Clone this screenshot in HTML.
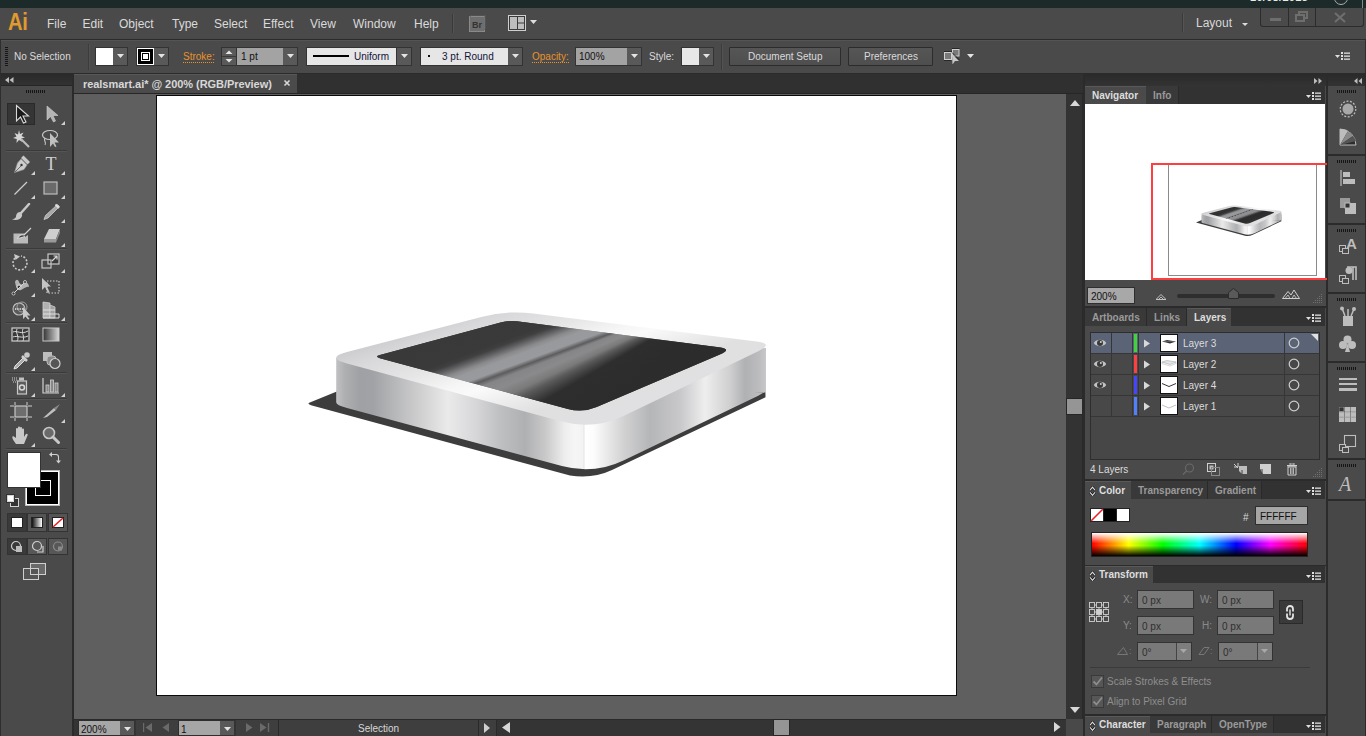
<!DOCTYPE html>
<html><head><meta charset="utf-8">
<style>
*{margin:0;padding:0;box-sizing:border-box}
html,body{width:1366px;height:736px;overflow:hidden;background:#4a4a4a;font-family:"Liberation Sans",sans-serif;font-size:10px;color:#d6d6d6}
.a{position:absolute;display:block}
.t{position:absolute;white-space:nowrap;line-height:1}
</style></head><body>

<div class="a" style="left:0px;top:0px;width:1366px;height:8px;background:#1c2a29;"></div>
<div class="t" style="left:1250px;top:-8.11px;font-size:11px;color:#e8ecec;font-weight:700;letter-spacing:0.3px">10/08/2013</div>
<svg class="a" style="left:1332px;top:-8px;" width="18" height="13" viewBox="0 0 18 13"><circle cx="9" cy="6" r="6.5" fill="#222c2c" stroke="#a9b0b0" stroke-width="1"/></svg>
<div class="a" style="left:1362px;top:0px;width:1px;height:8px;background:#7d8c8b;"></div>
<div class="a" style="left:0px;top:8px;width:1366px;height:31px;background:#4a4a4a;"></div>
<div class="a" style="left:0px;top:39px;width:1366px;height:1px;background:#2b2b2b;"></div>
<div class="t" style="left:8px;top:9px;font-size:24px;font-weight:700;color:#e09a30;letter-spacing:-0.5px;transform:scaleX(0.84);transform-origin:0 0;line-height:26px">Ai</div>
<div class="t" style="left:47px;top:17.84px;font-size:12px;color:#dadada;font-weight:400;">File</div>
<div class="t" style="left:82.5px;top:17.84px;font-size:12px;color:#dadada;font-weight:400;">Edit</div>
<div class="t" style="left:119px;top:17.84px;font-size:12px;color:#dadada;font-weight:400;">Object</div>
<div class="t" style="left:172px;top:17.84px;font-size:12px;color:#dadada;font-weight:400;">Type</div>
<div class="t" style="left:214px;top:17.84px;font-size:12px;color:#dadada;font-weight:400;">Select</div>
<div class="t" style="left:263px;top:17.84px;font-size:12px;color:#dadada;font-weight:400;">Effect</div>
<div class="t" style="left:310px;top:17.84px;font-size:12px;color:#dadada;font-weight:400;">View</div>
<div class="t" style="left:353px;top:17.84px;font-size:12px;color:#dadada;font-weight:400;">Window</div>
<div class="t" style="left:414px;top:17.84px;font-size:12px;color:#dadada;font-weight:400;">Help</div>
<div class="a" style="left:452px;top:14px;width:1px;height:19px;background:#3a3a3a;"></div>
<div class="a" style="left:453px;top:14px;width:1px;height:19px;background:#555;"></div>
<svg class="a" style="left:469px;top:15px;" width="17" height="17" viewBox="0 0 17 17"><rect x="0.5" y="1.5" width="15" height="15" fill="#6e6e6e" stroke="#8a8a8a"/><path d="M1 1.5L3 0H16V14L15.5 15" fill="none" stroke="#5a5a5a"/><text x="8" y="12.5" font-family="Liberation Sans" font-size="9" font-weight="700" fill="#333" text-anchor="middle">Br</text></svg>
<svg class="a" style="left:508px;top:15px;" width="30" height="17" viewBox="0 0 30 17"><rect x="0.5" y="0.5" width="17" height="15" fill="#3a3a3a" stroke="#cfcfcf"/><rect x="2" y="2" width="7" height="12" fill="#bdbdbd"/><rect x="10" y="2" width="6" height="5.5" fill="#bdbdbd"/><rect x="10" y="8.5" width="6" height="5.5" fill="#bdbdbd"/><path d="M22 5H29L25.5 9Z" fill="#dedede"/></svg>
<div class="a" style="left:1182px;top:13px;width:1px;height:19px;background:#3a3a3a;"></div>
<div class="a" style="left:1183px;top:13px;width:1px;height:19px;background:#555;"></div>
<div class="t" style="left:1196px;top:16.84px;font-size:12px;color:#d8d8d8;font-weight:400;">Layout</div>
<svg class="a" style="left:1242px;top:23px;" width="6" height="3" viewBox="0 0 6 3"><path d="M0 0H6L3.0 3Z" fill="#dcdcdc"/></svg>
<div class="a" style="left:1260px;top:8px;width:104px;height:19px;border:1px solid #2c2c2c;border-top:none;border-radius:0 0 3px 3px;background:#4a4a4a"></div>
<div class="a" style="left:1288px;top:8px;width:1px;height:18px;background:#2c2c2c;"></div>
<div class="a" style="left:1315px;top:8px;width:1px;height:18px;background:#2c2c2c;"></div>
<div class="a" style="left:1270px;top:18px;width:11px;height:3px;background:#6e6e6e;"></div>
<svg class="a" style="left:1295px;top:11px;" width="14" height="12" viewBox="0 0 14 12"><rect x="4" y="1" width="8" height="6" fill="none" stroke="#6e6e6e" stroke-width="2"/><rect x="1" y="4" width="8" height="6" fill="#4a4a4a" stroke="#6e6e6e" stroke-width="2"/></svg>
<svg class="a" style="left:1333px;top:12px;" width="14" height="11" viewBox="0 0 14 11"><path d="M2 1L12 10M12 1L2 10" stroke="#6e6e6e" stroke-width="2.2"/></svg>
<div class="a" style="left:0px;top:40px;width:1366px;height:33px;background:#4a4a4a;"></div>
<div class="a" style="left:0px;top:40px;width:1366px;height:1px;background:#545454;"></div>
<div class="a" style="left:0px;top:40px;width:1px;height:33px;background:#2e2e2e;"></div>
<div class="a" style="left:1365px;top:40px;width:1px;height:33px;background:#2e2e2e;"></div>
<div class="a" style="left:0px;top:73px;width:1366px;height:1px;background:#2b2b2b;"></div>
<div class="a" style="left:5px;top:47px;width:3px;height:20px;background:repeating-linear-gradient(180deg,#161616 0 1px,transparent 1px 2px);"></div>
<div class="t" style="left:14px;top:51.53px;font-size:10px;color:#dadada;font-weight:400;">No Selection</div>
<div class="a" style="left:88px;top:44px;width:1px;height:26px;background:#3c3c3c;"></div>
<div class="a" style="left:89px;top:44px;width:1px;height:26px;background:#525252;"></div>
<div class="a" style="left:95px;top:47px;width:19px;height:19px;background:#fff;border:1px solid #333"></div>
<div class="a" style="left:113px;top:47px;width:15px;height:19px;background:#595959;border:1px solid #333;border-left:none"></div>
<svg class="a" style="left:117px;top:54px;" width="7" height="4" viewBox="0 0 7 4"><path d="M0 0H7L3.5 4Z" fill="#e4e4e4"/></svg>
<div class="a" style="left:136px;top:47px;width:19px;height:19px;background:#000;border:1px solid #333"></div>
<svg class="a" style="left:137px;top:48px;" width="17" height="17" viewBox="0 0 17 17"><rect x="0.5" y="0.5" width="16" height="16" fill="none" stroke="#fff"/><rect x="4.5" y="4.5" width="8" height="8" fill="none" stroke="#fff"/><rect x="6" y="6" width="5" height="5" fill="#fff"/></svg>
<div class="a" style="left:154px;top:47px;width:15px;height:19px;background:#595959;border:1px solid #333;border-left:none"></div>
<svg class="a" style="left:158px;top:54px;" width="7" height="4" viewBox="0 0 7 4"><path d="M0 0H7L3.5 4Z" fill="#e4e4e4"/></svg>
<div class="t" style="left:183px;top:51.53px;font-size:10px;color:#e8922c;font-weight:400;">Stroke:</div>
<div class="a" style="left:183px;top:62px;width:31px;height:1px;background:repeating-linear-gradient(90deg,#e8922c 0 1px,transparent 1px 2px);"></div>
<div class="a" style="left:221px;top:47px;width:16px;height:19px;background:#595959;border:1px solid #333"></div>
<div class="a" style="left:222px;top:56px;width:14px;height:1px;background:#3a3a3a;"></div>
<svg class="a" style="left:225px;top:49px;" width="8" height="15" viewBox="0 0 8 15"><path d="M0.5 5H7.5L4 1.5Z" fill="#e4e4e4"/><path d="M0.5 10H7.5L4 13.5Z" fill="#e4e4e4"/></svg>
<div class="a" style="left:236px;top:47px;width:48px;height:19px;background:#a3a3a3;border:1px solid #333"></div>
<div class="t" style="left:241px;top:51.53px;font-size:10px;color:#111;font-weight:400;">1 pt</div>
<div class="a" style="left:283px;top:47px;width:15px;height:19px;background:#595959;border:1px solid #333;border-left:none"></div>
<svg class="a" style="left:287px;top:54px;" width="7" height="4" viewBox="0 0 7 4"><path d="M0 0H7L3.5 4Z" fill="#e4e4e4"/></svg>
<div class="a" style="left:306px;top:47px;width:91px;height:19px;background:#e6e6e6;border:1px solid #333"></div>
<div class="a" style="left:313px;top:55px;width:36px;height:2px;background:#000;"></div>
<div class="t" style="left:354px;top:51.53px;font-size:10px;color:#12123a;font-weight:400;">Uniform</div>
<div class="a" style="left:397px;top:47px;width:15px;height:19px;background:#595959;border:1px solid #333;border-left:none"></div>
<svg class="a" style="left:401px;top:54px;" width="7" height="4" viewBox="0 0 7 4"><path d="M0 0H7L3.5 4Z" fill="#e4e4e4"/></svg>
<div class="a" style="left:420px;top:47px;width:89px;height:19px;background:#e6e6e6;border:1px solid #333"></div>
<div class="a" style="left:428px;top:55px;width:2px;height:2px;background:#111;"></div>
<div class="t" style="left:442px;top:51.53px;font-size:10px;color:#12123a;font-weight:400;">3 pt. Round</div>
<div class="a" style="left:508px;top:47px;width:15px;height:19px;background:#595959;border:1px solid #333;border-left:none"></div>
<svg class="a" style="left:512px;top:54px;" width="7" height="4" viewBox="0 0 7 4"><path d="M0 0H7L3.5 4Z" fill="#e4e4e4"/></svg>
<div class="t" style="left:532px;top:51.53px;font-size:10px;color:#e8922c;font-weight:400;">Opacity:</div>
<div class="a" style="left:532px;top:62px;width:37px;height:1px;background:repeating-linear-gradient(90deg,#e8922c 0 1px,transparent 1px 2px);"></div>
<div class="a" style="left:575px;top:47px;width:53px;height:19px;background:#a3a3a3;border:1px solid #333"></div>
<div class="t" style="left:579px;top:51.53px;font-size:10px;color:#111;font-weight:400;">100%</div>
<div class="a" style="left:627px;top:47px;width:15px;height:19px;background:#595959;border:1px solid #333;border-left:none"></div>
<svg class="a" style="left:631px;top:54px;" width="7" height="4" viewBox="0 0 7 4"><path d="M0 0H7L3.5 4Z" fill="#e4e4e4"/></svg>
<div class="t" style="left:649px;top:51.53px;font-size:10px;color:#dadada;font-weight:400;">Style:</div>
<div class="a" style="left:681px;top:47px;width:19px;height:19px;background:#e8e8e8;border:1px solid #333"></div>
<div class="a" style="left:699px;top:47px;width:15px;height:19px;background:#595959;border:1px solid #333;border-left:none"></div>
<svg class="a" style="left:703px;top:54px;" width="7" height="4" viewBox="0 0 7 4"><path d="M0 0H7L3.5 4Z" fill="#e4e4e4"/></svg>
<div class="a" style="left:721px;top:44px;width:1px;height:26px;background:#3c3c3c;"></div>
<div class="a" style="left:722px;top:44px;width:1px;height:26px;background:#525252;"></div>
<div class="a" style="left:729px;top:47px;width:112px;height:19px;background:linear-gradient(#565656,#4e4e4e);border:1px solid #2c2c2c;border-radius:1px"></div>
<div class="t" style="left:748px;top:51.53px;font-size:10px;color:#dadada;font-weight:400;">Document Setup</div>
<div class="a" style="left:848px;top:47px;width:85px;height:19px;background:linear-gradient(#565656,#4e4e4e);border:1px solid #2c2c2c;border-radius:1px"></div>
<div class="t" style="left:864px;top:51.53px;font-size:10px;color:#dadada;font-weight:400;">Preferences</div>
<svg class="a" style="left:942px;top:46px;" width="20" height="18" viewBox="0 0 20 18"><rect x="2.5" y="6.5" width="7" height="7" fill="#7a7a7a" stroke="#d0d0d0" stroke-width="1"/><rect x="10.5" y="3.5" width="6.5" height="6.5" fill="#7a7a7a" stroke="#d0d0d0" stroke-width="1"/><path d="M2 5.5H10M2 14.5H9M10 2.5H17.5" stroke="#1e1e1e" stroke-width="0.8"/><path d="M10 8L17 15H13L10.5 18.5Z" fill="#c8c8c8"/><path d="M10 6.5L17.5 14" stroke="#1e1e1e" stroke-width="0.9"/></svg>
<svg class="a" style="left:967px;top:54px;" width="7" height="4" viewBox="0 0 7 4"><path d="M0 0H7L3.5 4Z" fill="#e4e4e4"/></svg>
<svg class="a" style="left:1335px;top:52px;" width="16" height="9" viewBox="0 0 16 9"><path d="M0 3H5L2.5 6Z" fill="#e0e0e0"/><rect x="6" y="0" width="2" height="2" fill="#e0e0e0"/><rect x="6" y="3" width="2" height="2" fill="#e0e0e0"/><rect x="6" y="6" width="2" height="2" fill="#e0e0e0"/><rect x="9" y="0.5" width="6" height="1.3" fill="#e0e0e0"/><rect x="9" y="3.5" width="6" height="1.3" fill="#e0e0e0"/><rect x="9" y="6.5" width="6" height="1.3" fill="#e0e0e0"/></svg>
<div class="a" style="left:0px;top:74px;width:72px;height:662px;background:#4a4a4a;"></div>
<div class="a" style="left:0px;top:74px;width:1px;height:662px;background:#2e2e2e;"></div>
<div class="a" style="left:1px;top:74px;width:71px;height:12px;background:linear-gradient(#2a2a2a,#333);"></div>
<div class="a" style="left:1px;top:85px;width:71px;height:1px;background:#262626;"></div>
<svg class="a" style="left:5px;top:77px;" width="9" height="7" viewBox="0 0 9 7"><path d="M4 0V6L0 3Z M8.5 0V6L4.5 3Z" fill="#bdbdbd"/></svg>
<div class="a" style="left:72px;top:74px;width:2px;height:662px;background:#2b2b2b;"></div>
<div class="a" style="left:26px;top:90px;width:19px;height:3px;background:repeating-linear-gradient(90deg,#151515 0 1px,transparent 1px 2px);"></div>
<div class="a" style="left:7px;top:103px;width:28px;height:22px;background:#353535;border:1px solid #2a2a2a"></div>
<svg class="a" style="left:14px;top:104px;" width="16" height="20" viewBox="0 0 16 20"><path d="M2.5 1.5V17L6.5 13L9.5 19L12 18L9 12H14.5Z" fill="#1a1a1a" stroke="#d8d8d8" stroke-width="1.1" stroke-linejoin="miter"/></svg>
<svg class="a" style="left:45px;top:105px;" width="14" height="18" viewBox="0 0 14 18"><path d="M2 1V15L5.5 11.5L8.5 17L10.5 16L8 10.5H13Z" fill="#b4b4b4" stroke="#cfcfcf" stroke-width="0.6"/></svg>
<svg class="a" style="left:61px;top:121px;" width="4" height="4" viewBox="0 0 4 4"><path d="M4 0V4H0Z" fill="#d0d0d0"/></svg>
<svg class="a" style="left:11px;top:128px;" width="20" height="20" viewBox="0 0 20 20"><path d="M8 2L9 6L12.5 4.5L10.5 8L14 9.5L10.2 10.5L11.5 14L8 12L5.5 15L5.8 11L2 10L5.5 8.5L3.5 5L7 6.5Z" fill="#d6d6d6"/><path d="M10 11L18 19" stroke="#bcbcbc" stroke-width="2.2"/></svg>
<svg class="a" style="left:41px;top:128px;" width="20" height="20" viewBox="0 0 20 20"><ellipse cx="9" cy="7" rx="7.5" ry="4.5" fill="none" stroke="#c8c8c8" stroke-width="1.2"/><path d="M4 10C2 13 6 14 4 17" fill="none" stroke="#c8c8c8" stroke-width="1.1"/><path d="M9 5V19L12 15.5L14 19L15.5 18.5L13.5 14.5H18Z" fill="#c0c0c0"/></svg>
<div class="a" style="left:6px;top:150px;width:61px;height:1px;background:#3a3a3a;"></div>
<div class="a" style="left:6px;top:151px;width:61px;height:1px;background:#555;"></div>
<svg class="a" style="left:12px;top:154px;" width="20" height="20" viewBox="0 0 20 20"><path d="M11.5 1.5L18 8L15.5 10.5L9 4Z" fill="#c8c8c8"/><path d="M9 5L15 11L12 15.5L2.5 18.5L5.5 9Z" fill="#cdcdcd" stroke="#9a9a9a" stroke-width="0.6"/><circle cx="9.5" cy="11" r="1.2" fill="#333"/><path d="M3 18L9 12" stroke="#555" stroke-width="0.8"/></svg>
<svg class="a" style="left:31px;top:171px;" width="4" height="4" viewBox="0 0 4 4"><path d="M4 0V4H0Z" fill="#d0d0d0"/></svg>
<svg class="a" style="left:43px;top:155px;" width="16" height="17" viewBox="0 0 16 17"><text x="8" y="15" font-family="Liberation Serif" font-size="18" fill="#cfcfcf" text-anchor="middle">T</text></svg>
<svg class="a" style="left:61px;top:171px;" width="4" height="4" viewBox="0 0 4 4"><path d="M4 0V4H0Z" fill="#d0d0d0"/></svg>
<svg class="a" style="left:13px;top:180px;" width="16" height="16" viewBox="0 0 16 16"><path d="M1.5 14.5L14 2" stroke="#cdcdcd" stroke-width="1.3"/></svg>
<svg class="a" style="left:31px;top:195px;" width="4" height="4" viewBox="0 0 4 4"><path d="M4 0V4H0Z" fill="#d0d0d0"/></svg>
<svg class="a" style="left:43px;top:181px;" width="16" height="14" viewBox="0 0 16 14"><rect x="1" y="1" width="13" height="12" fill="#6a6a6a" stroke="#bcbcbc" stroke-width="1.2"/></svg>
<svg class="a" style="left:61px;top:195px;" width="4" height="4" viewBox="0 0 4 4"><path d="M4 0V4H0Z" fill="#d0d0d0"/></svg>
<svg class="a" style="left:11px;top:203px;" width="20" height="18" viewBox="0 0 20 18"><path d="M18 1L10 10" stroke="#c8c8c8" stroke-width="2.5" stroke-linecap="round"/><path d="M9 9C6 9 5 12 5 14C4 15.5 2.5 16 1 16.5C5 17.5 10 17 11 13C11.5 11.5 10.5 10 9 9Z" fill="#c8c8c8"/></svg>
<svg class="a" style="left:42px;top:203px;" width="18" height="18" viewBox="0 0 18 18"><path d="M15.5 1.5L17.5 3.5L6 15L2 16.5L3.5 12.5Z" fill="#a8a8a8" stroke="#cfcfcf" stroke-width="0.8"/><path d="M13.5 1.5L17 5" stroke="#ddd" stroke-width="2"/></svg>
<svg class="a" style="left:61px;top:219px;" width="4" height="4" viewBox="0 0 4 4"><path d="M4 0V4H0Z" fill="#d0d0d0"/></svg>
<svg class="a" style="left:12px;top:227px;" width="20" height="18" viewBox="0 0 20 18"><path d="M1.5 6.5H13V10L16 8V16.5H1.5Z" fill="#bababa"/><path d="M19 1L12 8C9 7 6 9 5.5 11.5C8.5 11 11 10.5 13 9.5" fill="#444" stroke="#d0d0d0" stroke-width="1.2"/></svg>
<svg class="a" style="left:42px;top:227px;" width="20" height="17" viewBox="0 0 20 17"><path d="M7 2H18L14 12H2Z" fill="#cfcfcf"/><path d="M2 12H14V15.5H2Z" fill="#9a9a9a"/><path d="M14 12L18 2V6L14 15.5Z" fill="#8a8a8a"/></svg>
<svg class="a" style="left:61px;top:243px;" width="4" height="4" viewBox="0 0 4 4"><path d="M4 0V4H0Z" fill="#d0d0d0"/></svg>
<div class="a" style="left:6px;top:248px;width:61px;height:1px;background:#3a3a3a;"></div>
<div class="a" style="left:6px;top:249px;width:61px;height:1px;background:#555;"></div>
<svg class="a" style="left:11px;top:253px;" width="20" height="20" viewBox="0 0 20 20"><path d="M4 5A7 7 0 1 0 10 3" fill="none" stroke="#c8c8c8" stroke-width="1.6" stroke-dasharray="2 1.6"/><path d="M3 1L9 3.5L4.5 7Z" fill="#c8c8c8"/></svg>
<svg class="a" style="left:31px;top:269px;" width="4" height="4" viewBox="0 0 4 4"><path d="M4 0V4H0Z" fill="#d0d0d0"/></svg>
<svg class="a" style="left:41px;top:253px;" width="20" height="19" viewBox="0 0 20 19"><rect x="7" y="1" width="11" height="10" fill="#3a3a3a" stroke="#c8c8c8" stroke-width="1.2"/><rect x="1" y="7" width="9" height="8" fill="none" stroke="#c8c8c8" stroke-width="1.2"/><path d="M11 8L16 3M12.5 3H16V6.5" fill="none" stroke="#d8d8d8" stroke-width="1.2"/></svg>
<svg class="a" style="left:61px;top:269px;" width="4" height="4" viewBox="0 0 4 4"><path d="M4 0V4H0Z" fill="#d0d0d0"/></svg>
<svg class="a" style="left:11px;top:277px;" width="20" height="20" viewBox="0 0 20 20"><path d="M4 5C5 2 7 2 8 5C10 9 12 7 14 6C16 5 18 7 18 10C15 9 13 12 10 13C7 14 5 11 4 5Z" fill="#b4b4b4"/><circle cx="8" cy="10" r="2" fill="#333" stroke="#e0e0e0" stroke-width="1"/><path d="M2 17L14 5" stroke="#d8d8d8" stroke-width="1"/><circle cx="2.5" cy="16.5" r="1.5" fill="#333" stroke="#e0e0e0" stroke-width="0.8"/><circle cx="14" cy="5" r="1.5" fill="#333" stroke="#e0e0e0" stroke-width="0.8"/></svg>
<svg class="a" style="left:31px;top:293px;" width="4" height="4" viewBox="0 0 4 4"><path d="M4 0V4H0Z" fill="#d0d0d0"/></svg>
<svg class="a" style="left:41px;top:277px;" width="20" height="20" viewBox="0 0 20 20"><rect x="6" y="4" width="12" height="12" fill="none" stroke="#d0d0d0" stroke-width="1.2" stroke-dasharray="1.5 1.5"/><path d="M1 1V13L4 10L7 16L8.5 15L6 9.5H10Z" fill="#c4c4c4"/></svg>
<svg class="a" style="left:11px;top:301px;" width="20" height="19" viewBox="0 0 20 19"><circle cx="8" cy="8" r="6" fill="#5a5a5a" stroke="#c0c0c0" stroke-width="1.1"/><circle cx="11" cy="6" r="5" fill="none" stroke="#a0a0a0" stroke-width="1"/><path d="M4 8H12" stroke="#e8e8e8" stroke-width="1.3" stroke-dasharray="1.3 1"/><path d="M12 6V18L14.5 15.5L17 18.5L18.5 18L16 14.5H19.5Z" fill="#c8c8c8"/></svg>
<svg class="a" style="left:31px;top:317px;" width="4" height="4" viewBox="0 0 4 4"><path d="M4 0V4H0Z" fill="#d0d0d0"/></svg>
<svg class="a" style="left:42px;top:301px;" width="18" height="19" viewBox="0 0 18 19"><path d="M1 1L8 2V17H1Z" fill="#b0b0b0" stroke="#d0d0d0" stroke-width="0.8"/><path d="M8 4L13 6V17H8Z" fill="#a0a0a0" stroke="#d0d0d0" stroke-width="0.8"/><path d="M1 9H13M1 13H17V17H1" fill="none" stroke="#e0e0e0" stroke-width="1"/></svg>
<svg class="a" style="left:61px;top:317px;" width="4" height="4" viewBox="0 0 4 4"><path d="M4 0V4H0Z" fill="#d0d0d0"/></svg>
<div class="a" style="left:6px;top:322px;width:61px;height:1px;background:#3a3a3a;"></div>
<div class="a" style="left:6px;top:323px;width:61px;height:1px;background:#555;"></div>
<svg class="a" style="left:11px;top:327px;" width="20" height="16" viewBox="0 0 20 16"><rect x="1" y="1" width="17" height="13" fill="#3a3a3a" stroke="#cfcfcf" stroke-width="1.2"/><path d="M2 5C6 3 10 8 17 4M2 10C6 8 11 12 17 9M6 2C4 6 9 10 6 14M12 2C10 6 14 9 12 14" fill="none" stroke="#d8d8d8" stroke-width="1"/></svg>
<svg class="a" style="left:42px;top:327px;" width="18" height="16" viewBox="0 0 18 16"><defs><linearGradient id="tg" x1="0" x2="1"><stop offset="0" stop-color="#333"/><stop offset="1" stop-color="#d8d8d8"/></linearGradient></defs><rect x="1" y="1" width="16" height="13" fill="url(#tg)" stroke="#c8c8c8" stroke-width="1"/></svg>
<svg class="a" style="left:12px;top:351px;" width="18" height="19" viewBox="0 0 18 19"><path d="M11 7L3 15L2 18L5 17L13 9Z" fill="#aaa" stroke="#e0e0e0" stroke-width="1"/><path d="M10 5L15 10" stroke="#d0d0d0" stroke-width="2.5"/><circle cx="15" cy="4" r="2.8" fill="#c8c8c8"/></svg>
<svg class="a" style="left:31px;top:367px;" width="4" height="4" viewBox="0 0 4 4"><path d="M4 0V4H0Z" fill="#d0d0d0"/></svg>
<svg class="a" style="left:42px;top:351px;" width="20" height="19" viewBox="0 0 20 19"><rect x="1" y="1" width="9" height="9" fill="#bdbdbd"/><rect x="5" y="5" width="9" height="9" rx="3" fill="#8a8a8a" stroke="#bdbdbd" stroke-width="1"/><circle cx="13" cy="12.5" r="5" fill="#555" stroke="#cfcfcf" stroke-width="1.2"/></svg>
<div class="a" style="left:6px;top:372px;width:61px;height:1px;background:#3a3a3a;"></div>
<div class="a" style="left:6px;top:373px;width:61px;height:1px;background:#555;"></div>
<svg class="a" style="left:10px;top:376px;" width="22" height="19" viewBox="0 0 22 19"><path d="M2 2H7M2 4H8M3 6H7" stroke="#d0d0d0" stroke-width="1" stroke-dasharray="1 1"/><rect x="9" y="1.5" width="5" height="3" fill="#c0c0c0"/><rect x="7.5" y="5" width="9" height="13" fill="#5c5c5c" stroke="#c8c8c8" stroke-width="1.2"/><circle cx="12" cy="11.5" r="2.5" fill="none" stroke="#d8d8d8" stroke-width="1.5"/></svg>
<svg class="a" style="left:31px;top:393px;" width="4" height="4" viewBox="0 0 4 4"><path d="M4 0V4H0Z" fill="#d0d0d0"/></svg>
<svg class="a" style="left:42px;top:377px;" width="18" height="17" viewBox="0 0 18 17"><path d="M1 1V16H17" fill="none" stroke="#d0d0d0" stroke-width="1.2"/><rect x="4" y="8" width="3" height="7" fill="#888" stroke="#d0d0d0" stroke-width="0.8"/><rect x="8.5" y="3" width="3" height="12" fill="#888" stroke="#d0d0d0" stroke-width="0.8"/><rect x="13" y="6" width="3" height="9" fill="#888" stroke="#d0d0d0" stroke-width="0.8"/></svg>
<svg class="a" style="left:61px;top:393px;" width="4" height="4" viewBox="0 0 4 4"><path d="M4 0V4H0Z" fill="#d0d0d0"/></svg>
<div class="a" style="left:6px;top:398px;width:61px;height:1px;background:#3a3a3a;"></div>
<div class="a" style="left:6px;top:399px;width:61px;height:1px;background:#555;"></div>
<svg class="a" style="left:10px;top:402px;" width="22" height="19" viewBox="0 0 22 19"><rect x="5" y="4" width="12" height="11" fill="#6e6e6e" stroke="#cfcfcf" stroke-width="1.1"/><path d="M5 0V3M17 0V3M5 16V19M17 16V19M0 4H4M18 4H22M0 15H4M18 15H22" stroke="#cfcfcf" stroke-width="1"/></svg>
<svg class="a" style="left:42px;top:403px;" width="20" height="17" viewBox="0 0 20 17"><path d="M1 15L12 5L14 7L5 14Z" fill="#c0c0c0"/><path d="M12 5L18 1L14 7Z" fill="#8a8a8a"/></svg>
<svg class="a" style="left:61px;top:419px;" width="4" height="4" viewBox="0 0 4 4"><path d="M4 0V4H0Z" fill="#d0d0d0"/></svg>
<svg class="a" style="left:11px;top:426px;" width="20" height="19" viewBox="0 0 20 19"><path d="M5 18C2 14 1 12 1.5 10.5C2.5 9.5 4 11 5 12V3C5 1.5 7 1.5 7 3V8V1.5C7 0 9 0 9 1.5V8V2C9 0.5 11 0.5 11 2V8V3.5C11 2 13 2 13 3.5V11L14.5 8.5C15.5 7 17.5 8 16.5 9.5L13 18Z" fill="#c8c8c8"/></svg>
<svg class="a" style="left:31px;top:443px;" width="4" height="4" viewBox="0 0 4 4"><path d="M4 0V4H0Z" fill="#d0d0d0"/></svg>
<svg class="a" style="left:42px;top:426px;" width="18" height="18" viewBox="0 0 18 18"><circle cx="7" cy="7" r="5.5" fill="#6a6a6a" stroke="#c8c8c8" stroke-width="1.6"/><path d="M11 11L16.5 16.5" stroke="#c8c8c8" stroke-width="3" stroke-linecap="round"/></svg>
<div class="a" style="left:6px;top:448px;width:61px;height:1px;background:#3a3a3a;"></div>
<div class="a" style="left:6px;top:449px;width:61px;height:1px;background:#555;"></div>
<div class="a" style="left:25px;top:470px;width:35px;height:36px;background:#000;border:1px solid #bbb"></div>
<div class="a" style="left:26px;top:471px;width:33px;height:34px;border:1px solid #fff"></div>
<div class="a" style="left:35px;top:480px;width:16px;height:16px;border:1px solid #fff;background:#000"></div>
<div class="a" style="left:7px;top:452px;width:34px;height:36px;background:#fff;border:1px solid #333"></div>
<svg class="a" style="left:49px;top:452px;" width="12" height="12" viewBox="0 0 12 12"><path d="M2 2.5H7C8.5 2.5 9.5 3.5 9.5 5V9" fill="none" stroke="#d0d0d0" stroke-width="1.1"/><path d="M0 2.5L3 0V5Z M9.5 11.5L7 8.5H12Z" fill="#d0d0d0"/></svg>
<svg class="a" style="left:6px;top:494px;" width="13" height="13" viewBox="0 0 13 13"><rect x="4.5" y="4.5" width="8" height="8" fill="#333" stroke="#d0d0d0"/><rect x="0.5" y="0.5" width="8" height="8" fill="#fff" stroke="#333"/><rect x="1.5" y="1.5" width="6" height="6" fill="none" stroke="#bbb" stroke-width="0.6"/></svg>
<div class="a" style="left:7px;top:513px;width:61px;height:19px;background:#3a3a3a;"></div>
<div class="a" style="left:7px;top:513px;width:20px;height:19px;background:#3a3a3a;border:1px solid #333"></div>
<div class="a" style="left:27px;top:513px;width:20px;height:19px;background:#555;border:1px solid #333"></div>
<div class="a" style="left:48px;top:513px;width:20px;height:19px;background:#555;border:1px solid #333"></div>
<div class="a" style="left:11px;top:517px;width:12px;height:11px;background:#fff;border:1px solid #222"></div>
<div class="a" style="left:31px;top:517px;width:12px;height:11px;background:linear-gradient(90deg,#111,#fff);border:1px solid #222"></div>
<svg class="a" style="left:52px;top:517px;" width="12" height="11" viewBox="0 0 12 11"><rect x="0.5" y="0.5" width="11" height="10" fill="#fff" stroke="#222"/><path d="M1 10L11 1" stroke="#e8202a" stroke-width="1.6"/></svg>
<div class="a" style="left:7px;top:538px;width:20px;height:17px;background:#3a3a3a;border:1px solid #333"></div>
<div class="a" style="left:27px;top:538px;width:20px;height:17px;background:#575757;border:1px solid #333"></div>
<div class="a" style="left:48px;top:538px;width:20px;height:17px;background:#575757;border:1px solid #333"></div>
<svg class="a" style="left:10px;top:540px;" width="14" height="13" viewBox="0 0 14 13"><circle cx="6" cy="6" r="4.5" fill="none" stroke="#cfcfcf" stroke-width="1.2"/><rect x="6" y="6" width="6" height="6" fill="#bdbdbd"/></svg>
<svg class="a" style="left:31px;top:540px;" width="14" height="13" viewBox="0 0 14 13"><circle cx="6" cy="6" r="4.5" fill="none" stroke="#cfcfcf" stroke-width="1.2"/><path d="M12 6V12H6" fill="none" stroke="#cfcfcf" stroke-width="1.2"/></svg>
<svg class="a" style="left:52px;top:540px;" width="14" height="13" viewBox="0 0 14 13"><circle cx="6" cy="6.5" r="4.5" fill="none" stroke="#8a8a8a" stroke-width="1.2"/><rect x="6" y="6.5" width="4" height="4" fill="#8a8a8a"/></svg>
<svg class="a" style="left:23px;top:563px;" width="24" height="18" viewBox="0 0 24 18"><rect x="7.5" y="0.5" width="15" height="11" fill="#6a6a6a" stroke="#cfcfcf"/><rect x="0.5" y="5.5" width="15" height="11" fill="#555" stroke="#cfcfcf"/><rect x="7.5" y="0.5" width="15" height="11" fill="none" stroke="#cfcfcf"/></svg>
<div class="a" style="left:74px;top:74px;width:1010px;height:20px;background:#303030;"></div>
<div class="a" style="left:74px;top:74px;width:223px;height:19px;background:#4b4b4b;border-top:1px solid #585858"></div>
<div class="a" style="left:74px;top:93px;width:1010px;height:1px;background:#262626;"></div>
<div class="t" style="left:83px;top:78.69px;font-size:11px;color:#d8d8d8;font-weight:700;letter-spacing:-0.05px">realsmart.ai* @ 200% (RGB/Preview)</div>
<svg class="a" style="left:283px;top:79px;" width="8" height="8" viewBox="0 0 8 8"><path d="M1.5 1.5L6.5 6.5M6.5 1.5L1.5 6.5" stroke="#d8d8d8" stroke-width="1.6"/></svg>
<div class="a" style="left:74px;top:94px;width:992px;height:625px;background:#5f5f5f;"></div>
<div class="a" style="left:156px;top:95px;width:801px;height:601px;background:#fff;border:1px solid #0a0a0a"></div>
<svg class="a" style="left:0;top:0" width="1066" height="719" viewBox="0 0 1066 719"><defs>
<linearGradient id="sidem" gradientUnits="userSpaceOnUse" x1="336" y1="0" x2="766" y2="0"><stop offset="0.0000" stop-color="#c2c2c4"/><stop offset="0.0209" stop-color="#aeafb1"/><stop offset="0.0558" stop-color="#a0a1a4"/><stop offset="0.0860" stop-color="#a1a2a5"/><stop offset="0.1302" stop-color="#b4b5b7"/><stop offset="0.1953" stop-color="#cfcfd0"/><stop offset="0.2605" stop-color="#eaeaeb"/><stop offset="0.3233" stop-color="#d7d7d9"/><stop offset="0.3814" stop-color="#bfc0c2"/><stop offset="0.4395" stop-color="#afb0b2"/><stop offset="0.4860" stop-color="#c8c8c9"/><stop offset="0.5326" stop-color="#eeeeee"/><stop offset="0.5558" stop-color="#f6f6f6"/><stop offset="0.5744" stop-color="#f2f3f2"/><stop offset="0.5767" stop-color="#e4e4e4"/><stop offset="0.5791" stop-color="#ffffff"/><stop offset="0.6000" stop-color="#fcfcfc"/><stop offset="0.6256" stop-color="#ececec"/><stop offset="0.6721" stop-color="#d0d0d1"/><stop offset="0.7302" stop-color="#b5b6b8"/><stop offset="0.8000" stop-color="#c8c8ca"/><stop offset="0.8581" stop-color="#eeeeef"/><stop offset="0.9163" stop-color="#cfcfd0"/><stop offset="0.9512" stop-color="#b0b1b3"/><stop offset="0.9860" stop-color="#bdbdbf"/><stop offset="1.0000" stop-color="#c8c8ca"/></linearGradient>
<linearGradient id="rimm" gradientUnits="userSpaceOnUse" x1="145.20" y1="415.36" x2="198.00" y2="566.40"><stop offset="0.0000" stop-color="#c8c8ca"/><stop offset="0.1375" stop-color="#d8d8da"/><stop offset="0.3250" stop-color="#e6e6e7"/><stop offset="0.4688" stop-color="#f6f6f6"/><stop offset="0.5375" stop-color="#fafafa"/><stop offset="0.6562" stop-color="#ededee"/><stop offset="0.7812" stop-color="#e0e0e1"/><stop offset="1.0000" stop-color="#e0e0e2"/></linearGradient>
<linearGradient id="rimhim" gradientUnits="userSpaceOnUse" x1="0" y1="312" x2="0" y2="430">
<stop offset="0" stop-color="#fff" stop-opacity="0.5"/><stop offset="0.35" stop-color="#fff" stop-opacity="0"/>
</linearGradient>
<radialGradient id="rimhi2m" gradientUnits="userSpaceOnUse" cx="470" cy="392" r="70">
<stop offset="0" stop-color="#fff" stop-opacity="0.9"/><stop offset="1" stop-color="#fff" stop-opacity="0"/>
</radialGradient>
<linearGradient id="scrm" gradientUnits="userSpaceOnUse" x1="151.80" y1="434.24" x2="191.40" y2="547.52"><stop offset="0.0000" stop-color="#383838"/><stop offset="0.1500" stop-color="#2f2f2f"/><stop offset="0.2167" stop-color="#363637"/><stop offset="0.2583" stop-color="#505052"/><stop offset="0.3042" stop-color="#858688"/><stop offset="0.3583" stop-color="#9a9b9e"/><stop offset="0.4250" stop-color="#97989b"/><stop offset="0.4583" stop-color="#78787a"/><stop offset="0.4750" stop-color="#4c4c4e"/><stop offset="0.4858" stop-color="#88898c"/><stop offset="0.5417" stop-color="#909194"/><stop offset="0.6000" stop-color="#8a8a8c"/><stop offset="0.6458" stop-color="#6a6a6b"/><stop offset="0.6875" stop-color="#3a3a3a"/><stop offset="0.7333" stop-color="#2c2c2c"/><stop offset="0.8750" stop-color="#2e2e2e"/><stop offset="1.0000" stop-color="#353535"/></linearGradient>
</defs><path d="M309.2,402.7 L338,390.9 L338,370 L765,360 L765.5,397.3 L612,470 Q593,479 570,475.5 L311,405.3 Q307,404 309.2,402.7Z" fill="#3d3d3d"/><path d="M336.2,358 L766,348 L766,392.5 L336.2,402.5Z M347.04,396.57L481.34,361.39Q506.98,354.67 533.27,357.96L756.65,385.88Q774.21,388.08 758.26,395.74L623.48,460.43Q593.73,474.71 561.87,466.11L347.00,408.09Q325.38,402.25 347.04,396.57Z" fill="url(#sidem)"/><path d="M347.04,352.07L481.34,316.89Q506.98,310.17 533.27,313.46L756.65,341.38Q774.21,343.58 758.26,351.24L623.48,415.93Q593.73,430.21 561.87,421.61L347.00,363.59Q325.38,357.75 347.04,352.07Z" fill="url(#rimm)"/><path d="M379.87,355.04L500.53,322.46Q508.54,320.29 516.78,321.35L718.83,347.21Q732.91,349.01 719.84,354.57L596.67,406.91Q582.59,412.90 567.82,408.91L379.87,358.16Q374.07,356.60 379.87,355.04Z" fill="url(#scrm)"/></svg>
<style>.scr i{position:absolute;left:0;width:370px;height:1px}</style><div class="a scr" style="left:365px;top:316px;width:370px;height:100px;overflow:hidden;clip-path:path('M14.87,39.04L135.53,6.46Q143.54,4.29 151.78,5.35L353.83,31.21Q367.91,33.01 354.84,38.57L231.67,90.91Q217.59,96.90 202.82,92.91L14.87,42.16Q9.07,40.60 14.87,39.04Z')"><i style="top:0px;background:linear-gradient(90deg,#343434 -208.5px,#3a3a3a 203.5px,#404041 215.5px,#5a5a5c 226.5px,#8a8a8c 244.5px,#98999c 256.5px,#999a9d 279.5px,#7a7a7c 285.5px,#5c5c5e 291.5px,#858588 298.1px,#8a8a8c 308.9px,#7a7a7a 319.4px,#5a5a5a 326.3px,#4a4a4a 331.1px,#2e2e2e 339.5px,#2c2c2c 369.5px,#303030 891.5px)"></i><i style="top:1px;background:linear-gradient(90deg,#343434 -211.2px,#3a3a3a 200.8px,#404041 212.8px,#5a5a5c 223.8px,#8a8a8c 241.8px,#98999c 253.8px,#999a9d 276.8px,#7a7a7c 282.8px,#5c5c5e 288.8px,#858588 295.4px,#8a8a8c 306.2px,#7a7a7a 316.7px,#5a5a5a 323.6px,#4a4a4a 328.4px,#2e2e2e 336.8px,#2c2c2c 366.8px,#303030 888.8px)"></i><i style="top:2px;background:linear-gradient(90deg,#343434 -213.9px,#3a3a3a 198.1px,#404041 210.1px,#5a5a5c 221.1px,#8a8a8c 239.1px,#98999c 251.1px,#999a9d 274.1px,#7a7a7c 280.1px,#5c5c5e 286.1px,#858588 292.7px,#8a8a8c 303.5px,#7a7a7a 314.0px,#5a5a5a 320.9px,#4a4a4a 325.7px,#2e2e2e 334.1px,#2c2c2c 364.1px,#303030 886.1px)"></i><i style="top:3px;background:linear-gradient(90deg,#343434 -216.6px,#3a3a3a 195.4px,#404041 207.4px,#5a5a5c 218.4px,#8a8a8c 236.4px,#98999c 248.4px,#999a9d 271.4px,#7a7a7c 277.4px,#5c5c5e 283.4px,#858588 290.0px,#8a8a8c 300.8px,#7a7a7a 311.3px,#5a5a5a 318.2px,#4a4a4a 323.0px,#2e2e2e 331.4px,#2c2c2c 361.4px,#303030 883.4px)"></i><i style="top:4px;background:linear-gradient(90deg,#343434 -219.3px,#3a3a3a 192.7px,#404041 204.7px,#5a5a5c 215.7px,#8a8a8c 233.7px,#98999c 245.7px,#999a9d 268.7px,#7a7a7c 274.7px,#5c5c5e 280.7px,#858588 287.3px,#8a8a8c 298.1px,#7a7a7a 308.6px,#5a5a5a 315.5px,#4a4a4a 320.3px,#2e2e2e 328.7px,#2c2c2c 358.7px,#303030 880.7px)"></i><i style="top:5px;background:linear-gradient(90deg,#343434 -222.0px,#3a3a3a 190.0px,#404041 202.0px,#5a5a5c 213.0px,#8a8a8c 231.0px,#98999c 243.0px,#999a9d 266.0px,#7a7a7c 272.0px,#5c5c5e 278.0px,#858588 284.6px,#8a8a8c 295.4px,#7a7a7a 305.9px,#5a5a5a 312.8px,#4a4a4a 317.6px,#2e2e2e 326.0px,#2c2c2c 356.0px,#303030 878.0px)"></i><i style="top:6px;background:linear-gradient(90deg,#343434 -224.7px,#3a3a3a 187.3px,#404041 199.3px,#5a5a5c 210.3px,#8a8a8c 228.3px,#98999c 240.3px,#999a9d 263.3px,#7a7a7c 269.3px,#5c5c5e 275.3px,#858588 281.9px,#8a8a8c 292.7px,#7a7a7a 303.2px,#5a5a5a 310.1px,#4a4a4a 314.9px,#2e2e2e 323.3px,#2c2c2c 353.3px,#303030 875.3px)"></i><i style="top:7px;background:linear-gradient(90deg,#343434 -227.4px,#3a3a3a 184.6px,#404041 196.6px,#5a5a5c 207.6px,#8a8a8c 225.6px,#98999c 237.6px,#999a9d 260.6px,#7a7a7c 266.6px,#5c5c5e 272.6px,#858588 279.2px,#8a8a8c 290.0px,#7a7a7a 300.5px,#5a5a5a 307.4px,#4a4a4a 312.2px,#2e2e2e 320.6px,#2c2c2c 350.6px,#303030 872.6px)"></i><i style="top:8px;background:linear-gradient(90deg,#343434 -230.1px,#3a3a3a 181.9px,#404041 193.9px,#5a5a5c 204.9px,#8a8a8c 222.9px,#98999c 234.9px,#999a9d 257.9px,#7a7a7c 263.9px,#5c5c5e 269.9px,#858588 276.5px,#8a8a8c 287.3px,#7a7a7a 297.8px,#5a5a5a 304.7px,#4a4a4a 309.5px,#2e2e2e 317.9px,#2c2c2c 347.9px,#303030 869.9px)"></i><i style="top:9px;background:linear-gradient(90deg,#343434 -232.8px,#3a3a3a 179.2px,#404041 191.2px,#5a5a5c 202.2px,#8a8a8c 220.2px,#98999c 232.2px,#999a9d 255.2px,#7a7a7c 261.2px,#5c5c5e 267.2px,#858588 273.8px,#8a8a8c 284.6px,#7a7a7a 295.1px,#5a5a5a 302.0px,#4a4a4a 306.8px,#2e2e2e 315.2px,#2c2c2c 345.2px,#303030 867.2px)"></i><i style="top:10px;background:linear-gradient(90deg,#343434 -235.5px,#3a3a3a 176.5px,#404041 188.5px,#5a5a5c 199.5px,#8a8a8c 217.5px,#98999c 229.5px,#999a9d 252.5px,#7a7a7c 258.5px,#5c5c5e 264.5px,#858588 271.1px,#8a8a8c 281.9px,#7a7a7a 292.4px,#5a5a5a 299.3px,#4a4a4a 304.1px,#2e2e2e 312.5px,#2c2c2c 342.5px,#303030 864.5px)"></i><i style="top:11px;background:linear-gradient(90deg,#343434 -238.2px,#3a3a3a 173.8px,#404041 185.8px,#5a5a5c 196.8px,#8a8a8c 214.8px,#98999c 226.8px,#999a9d 249.8px,#7a7a7c 255.8px,#5c5c5e 261.8px,#858588 268.4px,#8a8a8c 279.2px,#7a7a7a 289.7px,#5a5a5a 296.6px,#4a4a4a 301.4px,#2e2e2e 309.8px,#2c2c2c 339.8px,#303030 861.8px)"></i><i style="top:12px;background:linear-gradient(90deg,#343434 -240.9px,#3a3a3a 171.1px,#404041 183.1px,#5a5a5c 194.1px,#8a8a8c 212.1px,#98999c 224.1px,#999a9d 247.1px,#7a7a7c 253.1px,#5c5c5e 259.1px,#858588 265.7px,#8a8a8c 276.5px,#7a7a7a 287.0px,#5a5a5a 293.9px,#4a4a4a 298.7px,#2e2e2e 307.1px,#2c2c2c 337.1px,#303030 859.1px)"></i><i style="top:13px;background:linear-gradient(90deg,#343434 -243.6px,#3a3a3a 168.4px,#404041 180.4px,#5a5a5c 191.4px,#8a8a8c 209.4px,#98999c 221.4px,#999a9d 244.4px,#7a7a7c 250.4px,#5c5c5e 256.4px,#858588 263.0px,#8a8a8c 273.8px,#7a7a7a 284.3px,#5a5a5a 291.2px,#4a4a4a 296.0px,#2e2e2e 304.4px,#2c2c2c 334.4px,#303030 856.4px)"></i><i style="top:14px;background:linear-gradient(90deg,#343434 -246.4px,#3a3a3a 165.6px,#404041 177.6px,#5a5a5c 188.6px,#8a8a8c 206.6px,#98999c 218.6px,#999a9d 241.6px,#7a7a7c 247.6px,#5c5c5e 253.6px,#858588 260.2px,#8a8a8c 271.0px,#7a7a7a 281.6px,#5a5a5a 288.4px,#4a4a4a 293.2px,#2e2e2e 301.6px,#2c2c2c 331.6px,#303030 853.6px)"></i><i style="top:15px;background:linear-gradient(90deg,#343434 -249.1px,#3a3a3a 162.9px,#404041 174.9px,#5a5a5c 185.9px,#8a8a8c 203.9px,#98999c 215.9px,#999a9d 238.9px,#7a7a7c 244.9px,#5c5c5e 250.9px,#858588 257.7px,#8a8a8c 268.6px,#7a7a7a 279.4px,#5a5a5a 286.3px,#4a4a4a 291.2px,#2e2e2e 299.7px,#2c2c2c 330.2px,#303030 850.9px)"></i><i style="top:16px;background:linear-gradient(90deg,#343434 -251.8px,#3a3a3a 160.2px,#404041 172.2px,#5a5a5c 183.2px,#8a8a8c 201.2px,#98999c 213.2px,#999a9d 236.2px,#7a7a7c 242.2px,#5c5c5e 248.2px,#858588 255.1px,#8a8a8c 266.3px,#7a7a7a 277.2px,#5a5a5a 284.3px,#4a4a4a 289.3px,#2e2e2e 298.0px,#2c2c2c 329.1px,#303030 848.2px)"></i><i style="top:17px;background:linear-gradient(90deg,#343434 -254.5px,#3a3a3a 157.5px,#404041 169.5px,#5a5a5c 180.5px,#8a8a8c 198.5px,#98999c 210.5px,#999a9d 233.5px,#7a7a7c 239.5px,#5c5c5e 245.5px,#858588 252.5px,#8a8a8c 263.9px,#7a7a7a 275.1px,#5a5a5a 282.3px,#4a4a4a 287.4px,#2e2e2e 296.3px,#2c2c2c 328.0px,#303030 845.5px)"></i><i style="top:18px;background:linear-gradient(90deg,#343434 -257.2px,#3a3a3a 154.8px,#404041 166.8px,#5a5a5c 177.8px,#8a8a8c 195.8px,#98999c 207.8px,#999a9d 230.8px,#7a7a7c 236.8px,#5c5c5e 242.8px,#858588 249.9px,#8a8a8c 261.6px,#7a7a7a 272.9px,#5a5a5a 280.3px,#4a4a4a 285.5px,#2e2e2e 294.5px,#2c2c2c 326.8px,#303030 842.8px)"></i><i style="top:19px;background:linear-gradient(90deg,#343434 -259.9px,#3a3a3a 152.1px,#404041 164.1px,#5a5a5c 175.1px,#8a8a8c 193.1px,#98999c 205.1px,#999a9d 228.1px,#7a7a7c 234.1px,#5c5c5e 240.1px,#858588 247.4px,#8a8a8c 259.2px,#7a7a7a 270.8px,#5a5a5a 278.3px,#4a4a4a 283.6px,#2e2e2e 292.8px,#2c2c2c 325.7px,#303030 840.1px)"></i><i style="top:20px;background:linear-gradient(90deg,#343434 -262.6px,#3a3a3a 149.4px,#404041 161.4px,#5a5a5c 172.4px,#8a8a8c 190.4px,#98999c 202.4px,#999a9d 225.4px,#7a7a7c 231.4px,#5c5c5e 237.4px,#858588 244.8px,#8a8a8c 256.9px,#7a7a7a 268.7px,#5a5a5a 276.3px,#4a4a4a 281.7px,#2e2e2e 291.0px,#2c2c2c 324.5px,#303030 837.4px)"></i><i style="top:21px;background:linear-gradient(90deg,#343434 -265.3px,#3a3a3a 146.7px,#404041 158.7px,#5a5a5c 169.7px,#8a8a8c 187.7px,#98999c 199.7px,#999a9d 222.7px,#7a7a7c 228.7px,#5c5c5e 234.7px,#858588 242.2px,#8a8a8c 254.5px,#7a7a7a 266.5px,#5a5a5a 274.3px,#4a4a4a 279.7px,#2e2e2e 289.3px,#2c2c2c 323.4px,#303030 834.7px)"></i><i style="top:22px;background:linear-gradient(90deg,#343434 -268.0px,#3a3a3a 144.0px,#404041 156.0px,#5a5a5c 167.0px,#8a8a8c 185.0px,#98999c 197.0px,#999a9d 220.0px,#7a7a7c 226.0px,#5c5c5e 232.0px,#858588 239.7px,#8a8a8c 252.2px,#7a7a7a 264.4px,#5a5a5a 272.3px,#4a4a4a 277.8px,#2e2e2e 287.5px,#2c2c2c 322.2px,#303030 832.0px)"></i><i style="top:23px;background:linear-gradient(90deg,#343434 -270.7px,#3a3a3a 141.3px,#404041 153.3px,#5a5a5c 164.3px,#8a8a8c 182.3px,#98999c 194.3px,#999a9d 217.3px,#7a7a7c 223.3px,#5c5c5e 229.3px,#858588 237.1px,#8a8a8c 249.8px,#7a7a7a 262.2px,#5a5a5a 270.3px,#4a4a4a 275.9px,#2e2e2e 285.8px,#2c2c2c 321.1px,#303030 829.3px)"></i><i style="top:24px;background:linear-gradient(90deg,#343434 -273.4px,#3a3a3a 138.6px,#404041 150.6px,#5a5a5c 161.6px,#8a8a8c 179.6px,#98999c 191.6px,#999a9d 214.6px,#7a7a7c 220.6px,#5c5c5e 226.6px,#858588 234.5px,#8a8a8c 247.4px,#7a7a7a 260.1px,#5a5a5a 268.3px,#4a4a4a 274.0px,#2e2e2e 284.1px,#2c2c2c 320.0px,#303030 826.6px)"></i><i style="top:25px;background:linear-gradient(90deg,#343434 -276.1px,#3a3a3a 135.9px,#404041 147.9px,#5a5a5c 158.9px,#8a8a8c 176.9px,#98999c 188.9px,#999a9d 211.9px,#7a7a7c 217.9px,#5c5c5e 223.9px,#858588 231.9px,#8a8a8c 245.1px,#7a7a7a 257.9px,#5a5a5a 266.3px,#4a4a4a 272.1px,#2e2e2e 282.3px,#2c2c2c 318.8px,#303030 823.9px)"></i><i style="top:26px;background:linear-gradient(90deg,#343434 -278.8px,#3a3a3a 133.2px,#404041 145.2px,#5a5a5c 156.2px,#8a8a8c 174.2px,#98999c 186.2px,#999a9d 209.2px,#7a7a7c 215.2px,#5c5c5e 221.2px,#858588 229.4px,#8a8a8c 242.7px,#7a7a7a 255.8px,#5a5a5a 264.3px,#4a4a4a 270.2px,#2e2e2e 280.6px,#2c2c2c 317.7px,#303030 821.2px)"></i><i style="top:27px;background:linear-gradient(90deg,#343434 -281.5px,#3a3a3a 130.5px,#404041 142.5px,#5a5a5c 153.5px,#8a8a8c 171.5px,#98999c 183.5px,#999a9d 206.5px,#7a7a7c 212.5px,#5c5c5e 218.5px,#858588 226.8px,#8a8a8c 240.4px,#7a7a7a 253.6px,#5a5a5a 262.2px,#4a4a4a 268.3px,#2e2e2e 278.8px,#2c2c2c 316.5px,#303030 818.5px)"></i><i style="top:28px;background:linear-gradient(90deg,#343434 -284.2px,#3a3a3a 127.8px,#404041 139.8px,#5a5a5c 150.8px,#8a8a8c 168.8px,#98999c 180.8px,#999a9d 203.8px,#7a7a7c 209.8px,#5c5c5e 215.8px,#858588 224.2px,#8a8a8c 238.0px,#7a7a7a 251.5px,#5a5a5a 260.2px,#4a4a4a 266.4px,#2e2e2e 277.1px,#2c2c2c 315.4px,#303030 815.8px)"></i><i style="top:29px;background:linear-gradient(90deg,#343434 -286.9px,#3a3a3a 125.1px,#404041 137.1px,#5a5a5c 148.1px,#8a8a8c 166.1px,#98999c 178.1px,#999a9d 201.1px,#7a7a7c 207.1px,#5c5c5e 213.1px,#858588 221.7px,#8a8a8c 235.7px,#7a7a7a 249.4px,#5a5a5a 258.2px,#4a4a4a 264.5px,#2e2e2e 275.3px,#2c2c2c 314.2px,#303030 813.1px)"></i><i style="top:30px;background:linear-gradient(90deg,#343434 -289.6px,#3a3a3a 122.4px,#404041 134.4px,#5a5a5c 145.4px,#8a8a8c 163.4px,#98999c 175.4px,#999a9d 198.4px,#7a7a7c 204.4px,#5c5c5e 210.4px,#858588 219.1px,#8a8a8c 233.3px,#7a7a7a 247.2px,#5a5a5a 256.2px,#4a4a4a 262.5px,#2e2e2e 273.6px,#2c2c2c 313.1px,#303030 810.4px)"></i><i style="top:31px;background:linear-gradient(90deg,#343434 -292.3px,#3a3a3a 119.7px,#404041 131.7px,#5a5a5c 142.7px,#8a8a8c 160.7px,#98999c 172.7px,#999a9d 195.7px,#7a7a7c 201.7px,#5c5c5e 207.7px,#858588 216.5px,#8a8a8c 231.0px,#7a7a7a 245.1px,#5a5a5a 254.2px,#4a4a4a 260.6px,#2e2e2e 271.9px,#2c2c2c 312.0px,#303030 807.7px)"></i><i style="top:32px;background:linear-gradient(90deg,#343434 -295.0px,#3a3a3a 117.0px,#404041 129.0px,#5a5a5c 140.0px,#8a8a8c 158.0px,#98999c 170.0px,#999a9d 193.0px,#7a7a7c 199.0px,#5c5c5e 205.0px,#858588 214.0px,#8a8a8c 228.6px,#7a7a7a 242.9px,#5a5a5a 252.2px,#4a4a4a 258.7px,#2e2e2e 270.1px,#2c2c2c 310.8px,#303030 805.0px)"></i><i style="top:33px;background:linear-gradient(90deg,#343434 -297.7px,#3a3a3a 114.3px,#404041 126.3px,#5a5a5c 137.3px,#8a8a8c 155.3px,#98999c 167.3px,#999a9d 190.3px,#7a7a7c 196.3px,#5c5c5e 202.3px,#858588 211.4px,#8a8a8c 226.3px,#7a7a7a 240.8px,#5a5a5a 250.2px,#4a4a4a 256.8px,#2e2e2e 268.4px,#2c2c2c 309.7px,#303030 802.3px)"></i><i style="top:34px;background:linear-gradient(90deg,#343434 -300.4px,#3a3a3a 111.6px,#404041 123.6px,#5a5a5c 134.6px,#8a8a8c 152.6px,#98999c 164.6px,#999a9d 187.6px,#7a7a7c 193.6px,#5c5c5e 199.6px,#858588 208.8px,#8a8a8c 223.9px,#7a7a7a 238.6px,#5a5a5a 248.2px,#4a4a4a 254.9px,#2e2e2e 266.6px,#2c2c2c 308.5px,#303030 799.6px)"></i><i style="top:35px;background:linear-gradient(90deg,#343434 -303.1px,#3a3a3a 108.9px,#404041 120.9px,#5a5a5c 131.9px,#8a8a8c 149.9px,#98999c 161.9px,#999a9d 184.9px,#7a7a7c 190.9px,#5c5c5e 196.9px,#858588 206.2px,#8a8a8c 221.5px,#7a7a7a 236.5px,#5a5a5a 246.2px,#4a4a4a 253.0px,#2e2e2e 264.9px,#2c2c2c 307.4px,#303030 796.9px)"></i><i style="top:36px;background:linear-gradient(90deg,#343434 -305.8px,#3a3a3a 106.2px,#404041 118.2px,#5a5a5c 129.2px,#8a8a8c 147.2px,#98999c 159.2px,#999a9d 182.2px,#7a7a7c 188.2px,#5c5c5e 194.2px,#858588 203.7px,#8a8a8c 219.2px,#7a7a7a 234.4px,#5a5a5a 244.2px,#4a4a4a 251.1px,#2e2e2e 263.1px,#2c2c2c 306.2px,#303030 794.2px)"></i><i style="top:37px;background:linear-gradient(90deg,#343434 -308.5px,#3a3a3a 103.5px,#404041 115.5px,#5a5a5c 126.5px,#8a8a8c 144.5px,#98999c 156.5px,#999a9d 179.5px,#7a7a7c 185.5px,#5c5c5e 191.5px,#858588 201.1px,#8a8a8c 216.8px,#7a7a7a 232.2px,#5a5a5a 242.2px,#4a4a4a 249.2px,#2e2e2e 261.4px,#2c2c2c 305.1px,#303030 791.5px)"></i><i style="top:38px;background:linear-gradient(90deg,#343434 -311.2px,#3a3a3a 100.8px,#404041 112.8px,#5a5a5c 123.8px,#8a8a8c 141.8px,#98999c 153.8px,#999a9d 176.8px,#7a7a7c 182.8px,#5c5c5e 188.8px,#858588 198.5px,#8a8a8c 214.5px,#7a7a7a 230.1px,#5a5a5a 240.2px,#4a4a4a 247.3px,#2e2e2e 259.7px,#2c2c2c 304.0px,#303030 788.8px)"></i><i style="top:39px;background:linear-gradient(90deg,#343434 -313.9px,#3a3a3a 98.1px,#404041 110.1px,#5a5a5c 121.1px,#8a8a8c 139.1px,#98999c 151.1px,#999a9d 174.1px,#7a7a7c 180.1px,#5c5c5e 186.1px,#858588 196.0px,#8a8a8c 212.1px,#7a7a7a 227.9px,#5a5a5a 238.2px,#4a4a4a 245.3px,#2e2e2e 257.9px,#2c2c2c 302.8px,#303030 786.1px)"></i><i style="top:40px;background:linear-gradient(90deg,#343434 -316.6px,#3a3a3a 95.4px,#404041 107.4px,#5a5a5c 118.4px,#8a8a8c 136.4px,#98999c 148.4px,#999a9d 171.4px,#7a7a7c 177.4px,#5c5c5e 183.4px,#858588 193.4px,#8a8a8c 209.8px,#7a7a7a 225.8px,#5a5a5a 236.2px,#4a4a4a 243.4px,#2e2e2e 256.2px,#2c2c2c 301.7px,#303030 783.4px)"></i><i style="top:41px;background:linear-gradient(90deg,#343434 -319.3px,#3a3a3a 92.7px,#404041 104.7px,#5a5a5c 115.7px,#8a8a8c 133.7px,#98999c 145.7px,#999a9d 168.7px,#7a7a7c 174.7px,#5c5c5e 180.7px,#858588 190.8px,#8a8a8c 207.4px,#7a7a7a 223.6px,#5a5a5a 234.2px,#4a4a4a 241.5px,#2e2e2e 254.4px,#2c2c2c 300.5px,#303030 780.7px)"></i><i style="top:42px;background:linear-gradient(90deg,#343434 -322.0px,#3a3a3a 90.0px,#404041 102.0px,#5a5a5c 113.0px,#8a8a8c 131.0px,#98999c 143.0px,#999a9d 166.0px,#7a7a7c 172.0px,#5c5c5e 178.0px,#858588 188.2px,#8a8a8c 205.1px,#7a7a7a 221.5px,#5a5a5a 232.1px,#4a4a4a 239.6px,#2e2e2e 252.7px,#2c2c2c 299.4px,#303030 778.0px)"></i><i style="top:43px;background:linear-gradient(90deg,#343434 -324.7px,#3a3a3a 87.3px,#404041 99.3px,#5a5a5c 110.3px,#8a8a8c 128.3px,#98999c 140.3px,#999a9d 163.3px,#7a7a7c 169.3px,#5c5c5e 175.3px,#858588 185.7px,#8a8a8c 202.7px,#7a7a7a 219.4px,#5a5a5a 230.1px,#4a4a4a 237.7px,#2e2e2e 251.0px,#2c2c2c 298.3px,#303030 775.3px)"></i><i style="top:44px;background:linear-gradient(90deg,#343434 -327.4px,#3a3a3a 84.6px,#404041 96.6px,#5a5a5c 107.6px,#8a8a8c 125.6px,#98999c 137.6px,#999a9d 160.6px,#7a7a7c 166.6px,#5c5c5e 172.6px,#858588 183.1px,#8a8a8c 200.3px,#7a7a7a 217.2px,#5a5a5a 228.1px,#4a4a4a 235.8px,#2e2e2e 249.2px,#2c2c2c 297.1px,#303030 772.6px)"></i><i style="top:45px;background:linear-gradient(90deg,#343434 -330.1px,#3a3a3a 81.9px,#404041 93.9px,#5a5a5c 104.9px,#8a8a8c 122.9px,#98999c 134.9px,#999a9d 157.9px,#7a7a7c 163.9px,#5c5c5e 169.9px,#858588 180.5px,#8a8a8c 198.0px,#7a7a7a 215.1px,#5a5a5a 226.1px,#4a4a4a 233.9px,#2e2e2e 247.5px,#2c2c2c 296.0px,#303030 769.9px)"></i><i style="top:46px;background:linear-gradient(90deg,#343434 -332.8px,#3a3a3a 79.2px,#404041 91.2px,#5a5a5c 102.2px,#8a8a8c 120.2px,#98999c 132.2px,#999a9d 155.2px,#7a7a7c 161.2px,#5c5c5e 167.2px,#858588 178.0px,#8a8a8c 195.6px,#7a7a7a 212.9px,#5a5a5a 224.1px,#4a4a4a 232.0px,#2e2e2e 245.7px,#2c2c2c 294.8px,#303030 767.2px)"></i><i style="top:47px;background:linear-gradient(90deg,#343434 -335.5px,#3a3a3a 76.5px,#404041 88.5px,#5a5a5c 99.5px,#8a8a8c 117.5px,#98999c 129.5px,#999a9d 152.5px,#7a7a7c 158.5px,#5c5c5e 164.5px,#858588 175.4px,#8a8a8c 193.3px,#7a7a7a 210.8px,#5a5a5a 222.1px,#4a4a4a 230.1px,#2e2e2e 244.0px,#2c2c2c 293.7px,#303030 764.5px)"></i><i style="top:48px;background:linear-gradient(90deg,#343434 -338.2px,#3a3a3a 73.8px,#404041 85.8px,#5a5a5c 96.8px,#8a8a8c 114.8px,#98999c 126.8px,#999a9d 149.8px,#7a7a7c 155.8px,#5c5c5e 161.8px,#858588 172.8px,#8a8a8c 190.9px,#7a7a7a 208.6px,#5a5a5a 220.1px,#4a4a4a 228.2px,#2e2e2e 242.2px,#2c2c2c 292.5px,#303030 761.8px)"></i><i style="top:49px;background:linear-gradient(90deg,#343434 -340.9px,#3a3a3a 71.1px,#404041 83.1px,#5a5a5c 94.1px,#8a8a8c 112.1px,#98999c 124.1px,#999a9d 147.1px,#7a7a7c 153.1px,#5c5c5e 159.1px,#858588 170.3px,#8a8a8c 188.6px,#7a7a7a 206.5px,#5a5a5a 218.1px,#4a4a4a 226.2px,#2e2e2e 240.5px,#2c2c2c 291.4px,#303030 759.1px)"></i><i style="top:50px;background:linear-gradient(90deg,#343434 -343.6px,#3a3a3a 68.4px,#404041 80.4px,#5a5a5c 91.4px,#8a8a8c 109.4px,#98999c 121.4px,#999a9d 144.4px,#7a7a7c 150.4px,#5c5c5e 156.4px,#858588 167.7px,#8a8a8c 186.2px,#7a7a7a 204.3px,#5a5a5a 216.1px,#4a4a4a 224.3px,#2e2e2e 238.8px,#2c2c2c 290.3px,#303030 756.4px)"></i><i style="top:51px;background:linear-gradient(90deg,#343434 -346.4px,#3a3a3a 65.6px,#404041 77.6px,#5a5a5c 88.6px,#8a8a8c 106.6px,#98999c 118.6px,#999a9d 141.6px,#7a7a7c 147.6px,#5c5c5e 153.6px,#858588 165.1px,#8a8a8c 183.9px,#7a7a7a 202.2px,#5a5a5a 214.1px,#4a4a4a 222.4px,#2e2e2e 237.0px,#2c2c2c 289.1px,#303030 753.6px)"></i><i style="top:52px;background:linear-gradient(90deg,#343434 -349.1px,#3a3a3a 62.9px,#404041 74.9px,#5a5a5c 85.9px,#8a8a8c 103.9px,#98999c 115.9px,#999a9d 138.9px,#7a7a7c 144.9px,#5c5c5e 150.9px,#858588 162.5px,#8a8a8c 181.5px,#7a7a7a 200.1px,#5a5a5a 212.1px,#4a4a4a 220.5px,#2e2e2e 235.3px,#2c2c2c 288.0px,#303030 750.9px)"></i><i style="top:53px;background:linear-gradient(90deg,#343434 -351.8px,#3a3a3a 60.2px,#404041 72.2px,#5a5a5c 83.2px,#8a8a8c 101.2px,#98999c 113.2px,#999a9d 136.2px,#7a7a7c 142.2px,#5c5c5e 148.2px,#858588 160.0px,#8a8a8c 179.2px,#7a7a7a 197.9px,#5a5a5a 210.1px,#4a4a4a 218.6px,#2e2e2e 233.5px,#2c2c2c 286.8px,#303030 748.2px)"></i><i style="top:54px;background:linear-gradient(90deg,#343434 -354.5px,#3a3a3a 57.5px,#404041 69.5px,#5a5a5c 80.5px,#8a8a8c 98.5px,#98999c 110.5px,#999a9d 133.5px,#7a7a7c 139.5px,#5c5c5e 145.5px,#858588 157.4px,#8a8a8c 176.8px,#7a7a7a 195.8px,#5a5a5a 208.1px,#4a4a4a 216.7px,#2e2e2e 231.8px,#2c2c2c 285.7px,#303030 745.5px)"></i><i style="top:55px;background:linear-gradient(90deg,#343434 -357.2px,#3a3a3a 54.8px,#404041 66.8px,#5a5a5c 77.8px,#8a8a8c 95.8px,#98999c 107.8px,#999a9d 130.8px,#7a7a7c 136.8px,#5c5c5e 142.8px,#858588 154.8px,#8a8a8c 174.4px,#7a7a7a 193.6px,#5a5a5a 206.1px,#4a4a4a 214.8px,#2e2e2e 230.0px,#2c2c2c 284.5px,#303030 742.8px)"></i><i style="top:56px;background:linear-gradient(90deg,#343434 -359.9px,#3a3a3a 52.1px,#404041 64.1px,#5a5a5c 75.1px,#8a8a8c 93.1px,#98999c 105.1px,#999a9d 128.1px,#7a7a7c 134.1px,#5c5c5e 140.1px,#858588 152.3px,#8a8a8c 172.1px,#7a7a7a 191.5px,#5a5a5a 204.1px,#4a4a4a 212.9px,#2e2e2e 228.3px,#2c2c2c 283.4px,#303030 740.1px)"></i><i style="top:57px;background:linear-gradient(90deg,#343434 -362.6px,#3a3a3a 49.4px,#404041 61.4px,#5a5a5c 72.4px,#8a8a8c 90.4px,#98999c 102.4px,#999a9d 125.4px,#7a7a7c 131.4px,#5c5c5e 137.4px,#858588 149.7px,#8a8a8c 169.7px,#7a7a7a 189.3px,#5a5a5a 202.0px,#4a4a4a 211.0px,#2e2e2e 226.6px,#2c2c2c 282.3px,#303030 737.4px)"></i><i style="top:58px;background:linear-gradient(90deg,#343434 -365.3px,#3a3a3a 46.7px,#404041 58.7px,#5a5a5c 69.7px,#8a8a8c 87.7px,#98999c 99.7px,#999a9d 122.7px,#7a7a7c 128.7px,#5c5c5e 134.7px,#858588 147.1px,#8a8a8c 167.4px,#7a7a7a 187.2px,#5a5a5a 200.0px,#4a4a4a 209.0px,#2e2e2e 224.8px,#2c2c2c 281.1px,#303030 734.7px)"></i><i style="top:59px;background:linear-gradient(90deg,#343434 -368.0px,#3a3a3a 44.0px,#404041 56.0px,#5a5a5c 67.0px,#8a8a8c 85.0px,#98999c 97.0px,#999a9d 120.0px,#7a7a7c 126.0px,#5c5c5e 132.0px,#858588 144.5px,#8a8a8c 165.0px,#7a7a7a 185.1px,#5a5a5a 198.0px,#4a4a4a 207.1px,#2e2e2e 223.1px,#2c2c2c 280.0px,#303030 732.0px)"></i><i style="top:60px;background:linear-gradient(90deg,#343434 -370.7px,#3a3a3a 41.3px,#404041 53.3px,#5a5a5c 64.3px,#8a8a8c 82.3px,#98999c 94.3px,#999a9d 117.3px,#7a7a7c 123.3px,#5c5c5e 129.3px,#858588 142.0px,#8a8a8c 162.7px,#7a7a7a 182.9px,#5a5a5a 196.0px,#4a4a4a 205.2px,#2e2e2e 221.3px,#2c2c2c 278.8px,#303030 729.3px)"></i><i style="top:61px;background:linear-gradient(90deg,#343434 -373.4px,#3a3a3a 38.6px,#404041 50.6px,#5a5a5c 61.6px,#8a8a8c 79.6px,#98999c 91.6px,#999a9d 114.6px,#7a7a7c 120.6px,#5c5c5e 126.6px,#858588 139.4px,#8a8a8c 160.3px,#7a7a7a 180.8px,#5a5a5a 194.0px,#4a4a4a 203.3px,#2e2e2e 219.6px,#2c2c2c 277.7px,#303030 726.6px)"></i><i style="top:62px;background:linear-gradient(90deg,#343434 -376.1px,#3a3a3a 35.9px,#404041 47.9px,#5a5a5c 58.9px,#8a8a8c 76.9px,#98999c 88.9px,#999a9d 111.9px,#7a7a7c 117.9px,#5c5c5e 123.9px,#858588 136.8px,#8a8a8c 158.0px,#7a7a7a 178.6px,#5a5a5a 192.0px,#4a4a4a 201.4px,#2e2e2e 217.8px,#2c2c2c 276.5px,#303030 723.9px)"></i><i style="top:63px;background:linear-gradient(90deg,#343434 -378.8px,#3a3a3a 33.2px,#404041 45.2px,#5a5a5c 56.2px,#8a8a8c 74.2px,#98999c 86.2px,#999a9d 109.2px,#7a7a7c 115.2px,#5c5c5e 121.2px,#858588 134.3px,#8a8a8c 155.6px,#7a7a7a 176.5px,#5a5a5a 190.0px,#4a4a4a 199.5px,#2e2e2e 216.1px,#2c2c2c 275.4px,#303030 721.2px)"></i><i style="top:64px;background:linear-gradient(90deg,#343434 -381.5px,#3a3a3a 30.5px,#404041 42.5px,#5a5a5c 53.5px,#8a8a8c 71.5px,#98999c 83.5px,#999a9d 106.5px,#7a7a7c 112.5px,#5c5c5e 118.5px,#858588 131.7px,#8a8a8c 153.3px,#7a7a7a 174.3px,#5a5a5a 188.0px,#4a4a4a 197.6px,#2e2e2e 214.4px,#2c2c2c 274.3px,#303030 718.5px)"></i><i style="top:65px;background:linear-gradient(90deg,#343434 -384.2px,#3a3a3a 27.8px,#404041 39.8px,#5a5a5c 50.8px,#8a8a8c 68.8px,#98999c 80.8px,#999a9d 103.8px,#7a7a7c 109.8px,#5c5c5e 115.8px,#858588 129.1px,#8a8a8c 150.9px,#7a7a7a 172.2px,#5a5a5a 186.0px,#4a4a4a 195.7px,#2e2e2e 212.6px,#2c2c2c 273.1px,#303030 715.8px)"></i><i style="top:66px;background:linear-gradient(90deg,#343434 -386.9px,#3a3a3a 25.1px,#404041 37.1px,#5a5a5c 48.1px,#8a8a8c 66.1px,#98999c 78.1px,#999a9d 101.1px,#7a7a7c 107.1px,#5c5c5e 113.1px,#858588 126.6px,#8a8a8c 148.5px,#7a7a7a 170.1px,#5a5a5a 184.0px,#4a4a4a 193.8px,#2e2e2e 210.9px,#2c2c2c 272.0px,#303030 713.1px)"></i><i style="top:67px;background:linear-gradient(90deg,#343434 -389.6px,#3a3a3a 22.4px,#404041 34.4px,#5a5a5c 45.4px,#8a8a8c 63.4px,#98999c 75.4px,#999a9d 98.4px,#7a7a7c 104.4px,#5c5c5e 110.4px,#858588 124.0px,#8a8a8c 146.2px,#7a7a7a 167.9px,#5a5a5a 182.0px,#4a4a4a 191.8px,#2e2e2e 209.1px,#2c2c2c 270.8px,#303030 710.4px)"></i><i style="top:68px;background:linear-gradient(90deg,#343434 -392.3px,#3a3a3a 19.7px,#404041 31.7px,#5a5a5c 42.7px,#8a8a8c 60.7px,#98999c 72.7px,#999a9d 95.7px,#7a7a7c 101.7px,#5c5c5e 107.7px,#858588 121.4px,#8a8a8c 143.8px,#7a7a7a 165.8px,#5a5a5a 180.0px,#4a4a4a 189.9px,#2e2e2e 207.4px,#2c2c2c 269.7px,#303030 707.7px)"></i><i style="top:69px;background:linear-gradient(90deg,#343434 -395.0px,#3a3a3a 17.0px,#404041 29.0px,#5a5a5c 40.0px,#8a8a8c 58.0px,#98999c 70.0px,#999a9d 93.0px,#7a7a7c 99.0px,#5c5c5e 105.0px,#858588 118.8px,#8a8a8c 141.5px,#7a7a7a 163.6px,#5a5a5a 178.0px,#4a4a4a 188.0px,#2e2e2e 205.6px,#2c2c2c 268.5px,#303030 705.0px)"></i><i style="top:70px;background:linear-gradient(90deg,#343434 -397.7px,#3a3a3a 14.3px,#404041 26.3px,#5a5a5c 37.3px,#8a8a8c 55.3px,#98999c 67.3px,#999a9d 90.3px,#7a7a7c 96.3px,#5c5c5e 102.3px,#858588 116.3px,#8a8a8c 139.1px,#7a7a7a 161.5px,#5a5a5a 176.0px,#4a4a4a 186.1px,#2e2e2e 203.9px,#2c2c2c 267.4px,#303030 702.3px)"></i><i style="top:71px;background:linear-gradient(90deg,#343434 -400.4px,#3a3a3a 11.6px,#404041 23.6px,#5a5a5c 34.6px,#8a8a8c 52.6px,#98999c 64.6px,#999a9d 87.6px,#7a7a7c 93.6px,#5c5c5e 99.6px,#858588 113.7px,#8a8a8c 136.8px,#7a7a7a 159.3px,#5a5a5a 174.0px,#4a4a4a 184.2px,#2e2e2e 202.2px,#2c2c2c 266.3px,#303030 699.6px)"></i><i style="top:72px;background:linear-gradient(90deg,#343434 -403.1px,#3a3a3a 8.9px,#404041 20.9px,#5a5a5c 31.9px,#8a8a8c 49.9px,#98999c 61.9px,#999a9d 84.9px,#7a7a7c 90.9px,#5c5c5e 96.9px,#858588 111.1px,#8a8a8c 134.4px,#7a7a7a 157.2px,#5a5a5a 171.9px,#4a4a4a 182.3px,#2e2e2e 200.4px,#2c2c2c 265.1px,#303030 696.9px)"></i><i style="top:73px;background:linear-gradient(90deg,#343434 -405.8px,#3a3a3a 6.2px,#404041 18.2px,#5a5a5c 29.2px,#8a8a8c 47.2px,#98999c 59.2px,#999a9d 82.2px,#7a7a7c 88.2px,#5c5c5e 94.2px,#858588 108.6px,#8a8a8c 132.1px,#7a7a7a 155.0px,#5a5a5a 169.9px,#4a4a4a 180.4px,#2e2e2e 198.7px,#2c2c2c 264.0px,#303030 694.2px)"></i><i style="top:74px;background:linear-gradient(90deg,#343434 -408.5px,#3a3a3a 3.5px,#404041 15.5px,#5a5a5c 26.5px,#8a8a8c 44.5px,#98999c 56.5px,#999a9d 79.5px,#7a7a7c 85.5px,#5c5c5e 91.5px,#858588 106.0px,#8a8a8c 129.7px,#7a7a7a 152.9px,#5a5a5a 167.9px,#4a4a4a 178.5px,#2e2e2e 196.9px,#2c2c2c 262.8px,#303030 691.5px)"></i><i style="top:75px;background:linear-gradient(90deg,#343434 -411.2px,#3a3a3a 0.8px,#404041 12.8px,#5a5a5c 23.8px,#8a8a8c 41.8px,#98999c 53.8px,#999a9d 76.8px,#7a7a7c 82.8px,#5c5c5e 88.8px,#858588 103.4px,#8a8a8c 127.4px,#7a7a7a 150.8px,#5a5a5a 165.9px,#4a4a4a 176.6px,#2e2e2e 195.2px,#2c2c2c 261.7px,#303030 688.8px)"></i><i style="top:76px;background:linear-gradient(90deg,#343434 -413.9px,#3a3a3a -1.9px,#404041 10.1px,#5a5a5c 21.1px,#8a8a8c 39.1px,#98999c 51.1px,#999a9d 74.1px,#7a7a7c 80.1px,#5c5c5e 86.1px,#858588 100.8px,#8a8a8c 125.0px,#7a7a7a 148.6px,#5a5a5a 163.9px,#4a4a4a 174.7px,#2e2e2e 193.4px,#2c2c2c 260.5px,#303030 686.1px)"></i><i style="top:77px;background:linear-gradient(90deg,#343434 -416.6px,#3a3a3a -4.6px,#404041 7.4px,#5a5a5c 18.4px,#8a8a8c 36.4px,#98999c 48.4px,#999a9d 71.4px,#7a7a7c 77.4px,#5c5c5e 83.4px,#858588 98.3px,#8a8a8c 122.6px,#7a7a7a 146.5px,#5a5a5a 161.9px,#4a4a4a 172.7px,#2e2e2e 191.7px,#2c2c2c 259.4px,#303030 683.4px)"></i><i style="top:78px;background:linear-gradient(90deg,#343434 -419.3px,#3a3a3a -7.3px,#404041 4.7px,#5a5a5c 15.7px,#8a8a8c 33.7px,#98999c 45.7px,#999a9d 68.7px,#7a7a7c 74.7px,#5c5c5e 80.7px,#858588 95.7px,#8a8a8c 120.3px,#7a7a7a 144.3px,#5a5a5a 159.9px,#4a4a4a 170.8px,#2e2e2e 190.0px,#2c2c2c 258.3px,#303030 680.7px)"></i><i style="top:79px;background:linear-gradient(90deg,#343434 -422.0px,#3a3a3a -10.0px,#404041 2.0px,#5a5a5c 13.0px,#8a8a8c 31.0px,#98999c 43.0px,#999a9d 66.0px,#7a7a7c 72.0px,#5c5c5e 78.0px,#858588 93.1px,#8a8a8c 117.9px,#7a7a7a 142.2px,#5a5a5a 157.9px,#4a4a4a 168.9px,#2e2e2e 188.2px,#2c2c2c 257.1px,#303030 678.0px)"></i><i style="top:80px;background:linear-gradient(90deg,#343434 -424.7px,#3a3a3a -12.7px,#404041 -0.7px,#5a5a5c 10.3px,#8a8a8c 28.3px,#98999c 40.3px,#999a9d 63.3px,#7a7a7c 69.3px,#5c5c5e 75.3px,#858588 90.6px,#8a8a8c 115.6px,#7a7a7a 140.0px,#5a5a5a 155.9px,#4a4a4a 167.0px,#2e2e2e 186.5px,#2c2c2c 256.0px,#303030 675.3px)"></i><i style="top:81px;background:linear-gradient(90deg,#343434 -427.4px,#3a3a3a -15.4px,#404041 -3.4px,#5a5a5c 7.6px,#8a8a8c 25.6px,#98999c 37.6px,#999a9d 60.6px,#7a7a7c 66.6px,#5c5c5e 72.6px,#858588 88.0px,#8a8a8c 113.2px,#7a7a7a 137.9px,#5a5a5a 153.9px,#4a4a4a 165.1px,#2e2e2e 184.7px,#2c2c2c 254.8px,#303030 672.6px)"></i><i style="top:82px;background:linear-gradient(90deg,#343434 -430.1px,#3a3a3a -18.1px,#404041 -6.1px,#5a5a5c 4.9px,#8a8a8c 22.9px,#98999c 34.9px,#999a9d 57.9px,#7a7a7c 63.9px,#5c5c5e 69.9px,#858588 85.4px,#8a8a8c 110.9px,#7a7a7a 135.8px,#5a5a5a 151.9px,#4a4a4a 163.2px,#2e2e2e 183.0px,#2c2c2c 253.7px,#303030 669.9px)"></i><i style="top:83px;background:linear-gradient(90deg,#343434 -432.8px,#3a3a3a -20.8px,#404041 -8.8px,#5a5a5c 2.2px,#8a8a8c 20.2px,#98999c 32.2px,#999a9d 55.2px,#7a7a7c 61.2px,#5c5c5e 67.2px,#858588 82.8px,#8a8a8c 108.5px,#7a7a7a 133.6px,#5a5a5a 149.9px,#4a4a4a 161.3px,#2e2e2e 181.2px,#2c2c2c 252.5px,#303030 667.2px)"></i><i style="top:84px;background:linear-gradient(90deg,#343434 -435.5px,#3a3a3a -23.5px,#404041 -11.5px,#5a5a5c -0.5px,#8a8a8c 17.5px,#98999c 29.5px,#999a9d 52.5px,#7a7a7c 58.5px,#5c5c5e 64.5px,#858588 80.3px,#8a8a8c 106.2px,#7a7a7a 131.5px,#5a5a5a 147.9px,#4a4a4a 159.4px,#2e2e2e 179.5px,#2c2c2c 251.4px,#303030 664.5px)"></i><i style="top:85px;background:linear-gradient(90deg,#343434 -438.2px,#3a3a3a -26.2px,#404041 -14.2px,#5a5a5c -3.2px,#8a8a8c 14.8px,#98999c 26.8px,#999a9d 49.8px,#7a7a7c 55.8px,#5c5c5e 61.8px,#858588 77.7px,#8a8a8c 103.8px,#7a7a7a 129.3px,#5a5a5a 145.9px,#4a4a4a 157.5px,#2e2e2e 177.8px,#2c2c2c 250.3px,#303030 661.8px)"></i><i style="top:86px;background:linear-gradient(90deg,#343434 -440.9px,#3a3a3a -28.9px,#404041 -16.9px,#5a5a5c -5.9px,#8a8a8c 12.1px,#98999c 24.1px,#999a9d 47.1px,#7a7a7c 53.1px,#5c5c5e 59.1px,#858588 75.1px,#8a8a8c 101.5px,#7a7a7a 127.2px,#5a5a5a 143.9px,#4a4a4a 155.5px,#2e2e2e 176.0px,#2c2c2c 249.1px,#303030 659.1px)"></i><i style="top:87px;background:linear-gradient(90deg,#343434 -443.6px,#3a3a3a -31.6px,#404041 -19.6px,#5a5a5c -8.6px,#8a8a8c 9.4px,#98999c 21.4px,#999a9d 44.4px,#7a7a7c 50.4px,#5c5c5e 56.4px,#858588 72.6px,#8a8a8c 99.1px,#7a7a7a 125.0px,#5a5a5a 141.8px,#4a4a4a 153.6px,#2e2e2e 174.3px,#2c2c2c 248.0px,#303030 656.4px)"></i><i style="top:88px;background:linear-gradient(90deg,#343434 -446.4px,#3a3a3a -34.4px,#404041 -22.4px,#5a5a5c -11.4px,#8a8a8c 6.6px,#98999c 18.6px,#999a9d 41.6px,#7a7a7c 47.6px,#5c5c5e 53.6px,#858588 70.0px,#8a8a8c 96.7px,#7a7a7a 122.9px,#5a5a5a 139.8px,#4a4a4a 151.7px,#2e2e2e 172.5px,#2c2c2c 246.8px,#303030 653.6px)"></i><i style="top:89px;background:linear-gradient(90deg,#343434 -449.1px,#3a3a3a -37.1px,#404041 -25.1px,#5a5a5c -14.1px,#8a8a8c 3.9px,#98999c 15.9px,#999a9d 38.9px,#7a7a7c 44.9px,#5c5c5e 50.9px,#858588 67.4px,#8a8a8c 94.4px,#7a7a7a 120.8px,#5a5a5a 137.8px,#4a4a4a 149.8px,#2e2e2e 170.8px,#2c2c2c 245.7px,#303030 650.9px)"></i><i style="top:90px;background:linear-gradient(90deg,#343434 -451.8px,#3a3a3a -39.8px,#404041 -27.8px,#5a5a5c -16.8px,#8a8a8c 1.2px,#98999c 13.2px,#999a9d 36.2px,#7a7a7c 42.2px,#5c5c5e 48.2px,#858588 64.9px,#8a8a8c 92.0px,#7a7a7a 118.6px,#5a5a5a 135.8px,#4a4a4a 147.9px,#2e2e2e 169.0px,#2c2c2c 244.5px,#303030 648.2px)"></i><i style="top:91px;background:linear-gradient(90deg,#343434 -454.5px,#3a3a3a -42.5px,#404041 -30.5px,#5a5a5c -19.5px,#8a8a8c -1.5px,#98999c 10.5px,#999a9d 33.5px,#7a7a7c 39.5px,#5c5c5e 45.5px,#858588 62.3px,#8a8a8c 89.7px,#7a7a7a 116.5px,#5a5a5a 133.8px,#4a4a4a 146.0px,#2e2e2e 167.3px,#2c2c2c 243.4px,#303030 645.5px)"></i><i style="top:92px;background:linear-gradient(90deg,#343434 -457.2px,#3a3a3a -45.2px,#404041 -33.2px,#5a5a5c -22.2px,#8a8a8c -4.2px,#98999c 7.8px,#999a9d 30.8px,#7a7a7c 36.8px,#5c5c5e 42.8px,#858588 59.7px,#8a8a8c 87.3px,#7a7a7a 114.3px,#5a5a5a 131.8px,#4a4a4a 144.1px,#2e2e2e 165.6px,#2c2c2c 242.3px,#303030 642.8px)"></i><i style="top:93px;background:linear-gradient(90deg,#343434 -459.9px,#3a3a3a -47.9px,#404041 -35.9px,#5a5a5c -24.9px,#8a8a8c -6.9px,#98999c 5.1px,#999a9d 28.1px,#7a7a7c 34.1px,#5c5c5e 40.1px,#858588 57.1px,#8a8a8c 85.0px,#7a7a7a 112.2px,#5a5a5a 129.8px,#4a4a4a 142.2px,#2e2e2e 163.8px,#2c2c2c 241.1px,#303030 640.1px)"></i><i style="top:94px;background:linear-gradient(90deg,#343434 -462.6px,#3a3a3a -50.6px,#404041 -38.6px,#5a5a5c -27.6px,#8a8a8c -9.6px,#98999c 2.4px,#999a9d 25.4px,#7a7a7c 31.4px,#5c5c5e 37.4px,#858588 54.6px,#8a8a8c 82.6px,#7a7a7a 110.0px,#5a5a5a 127.8px,#4a4a4a 140.3px,#2e2e2e 162.1px,#2c2c2c 240.0px,#303030 637.4px)"></i><i style="top:95px;background:linear-gradient(90deg,#343434 -465.3px,#3a3a3a -53.3px,#404041 -41.3px,#5a5a5c -30.3px,#8a8a8c -12.3px,#98999c -0.3px,#999a9d 22.7px,#7a7a7c 28.7px,#5c5c5e 34.7px,#858588 52.0px,#8a8a8c 80.3px,#7a7a7a 107.9px,#5a5a5a 125.8px,#4a4a4a 138.3px,#2e2e2e 160.3px,#2c2c2c 238.8px,#303030 634.7px)"></i><i style="top:96px;background:linear-gradient(90deg,#343434 -468.0px,#3a3a3a -56.0px,#404041 -44.0px,#5a5a5c -33.0px,#8a8a8c -15.0px,#98999c -3.0px,#999a9d 20.0px,#7a7a7c 26.0px,#5c5c5e 32.0px,#858588 49.4px,#8a8a8c 77.9px,#7a7a7a 105.7px,#5a5a5a 123.8px,#4a4a4a 136.4px,#2e2e2e 158.6px,#2c2c2c 237.7px,#303030 632.0px)"></i><i style="top:97px;background:linear-gradient(90deg,#343434 -470.7px,#3a3a3a -58.7px,#404041 -46.7px,#5a5a5c -35.7px,#8a8a8c -17.7px,#98999c -5.7px,#999a9d 17.3px,#7a7a7c 23.3px,#5c5c5e 29.3px,#858588 46.9px,#8a8a8c 75.6px,#7a7a7a 103.6px,#5a5a5a 121.8px,#4a4a4a 134.5px,#2e2e2e 156.8px,#2c2c2c 236.5px,#303030 629.3px)"></i><i style="top:98px;background:linear-gradient(90deg,#343434 -473.4px,#3a3a3a -61.4px,#404041 -49.4px,#5a5a5c -38.4px,#8a8a8c -20.4px,#98999c -8.4px,#999a9d 14.6px,#7a7a7c 20.6px,#5c5c5e 26.6px,#858588 44.3px,#8a8a8c 73.2px,#7a7a7a 101.5px,#5a5a5a 119.8px,#4a4a4a 132.6px,#2e2e2e 155.1px,#2c2c2c 235.4px,#303030 626.6px)"></i><i style="top:99px;background:linear-gradient(90deg,#343434 -476.1px,#3a3a3a -64.1px,#404041 -52.1px,#5a5a5c -41.1px,#8a8a8c -23.1px,#98999c -11.1px,#999a9d 11.9px,#7a7a7c 17.9px,#5c5c5e 23.9px,#858588 41.7px,#8a8a8c 70.8px,#7a7a7a 99.3px,#5a5a5a 117.8px,#4a4a4a 130.7px,#2e2e2e 153.4px,#2c2c2c 234.3px,#303030 623.9px)"></i></div>
<div class="a" style="left:1066px;top:94px;width:17px;height:625px;background:#333333;"></div>
<svg class="a" style="left:1070px;top:100px;" width="10" height="6" viewBox="0 0 10 6"><path d="M0 6H10L5 0Z" fill="#d8d8d8"/></svg>
<div class="a" style="left:1066px;top:398px;width:17px;height:17px;background:#959595;border:1px solid #262626"></div>
<svg class="a" style="left:1070px;top:707px;" width="10" height="6" viewBox="0 0 10 6"><path d="M0 0H10L5 6Z" fill="#d8d8d8"/></svg>
<div class="a" style="left:1082px;top:94px;width:1px;height:625px;background:#2a2a2a;"></div>
<div class="a" style="left:1083px;top:74px;width:2px;height:662px;background:#2b2b2b;"></div>
<div class="a" style="left:74px;top:719px;width:992px;height:17px;background:#343434;"></div>
<div class="a" style="left:74px;top:719px;width:992px;height:1px;background:#2a2a2a;"></div>
<div class="a" style="left:1066px;top:719px;width:17px;height:17px;background:#494949;"></div>
<div class="a" style="left:78px;top:720px;width:43px;height:16px;background:#a6a6a6;border:1px solid #2e2e2e"></div>
<div class="t" style="left:81px;top:724.53px;font-size:10px;color:#111;font-weight:400;">200%</div>
<div class="a" style="left:120px;top:720px;width:15px;height:16px;background:#595959;border:1px solid #333;border-left:none"></div>
<svg class="a" style="left:124px;top:727px;" width="7" height="4" viewBox="0 0 7 4"><path d="M0 0H7L3.5 4Z" fill="#e4e4e4"/></svg>
<div class="a" style="left:136px;top:720px;width:42px;height:16px;background:#3e3e3e;"></div>
<svg class="a" style="left:143px;top:723px;" width="10" height="9" viewBox="0 0 10 9"><path d="M0.5 0V9" stroke="#6a6a6a" stroke-width="1.4"/><path d="M9 0V9L2.5 4.5Z" fill="#6a6a6a"/></svg>
<svg class="a" style="left:162px;top:723px;" width="7" height="9" viewBox="0 0 7 9"><path d="M7 0V9L0.5 4.5Z" fill="#6a6a6a"/></svg>
<div class="a" style="left:178px;top:720px;width:43px;height:16px;background:#a6a6a6;border:1px solid #2e2e2e"></div>
<div class="t" style="left:181px;top:724.53px;font-size:10px;color:#111;font-weight:400;">1</div>
<div class="a" style="left:220px;top:720px;width:15px;height:16px;background:#595959;border:1px solid #333;border-left:none"></div>
<svg class="a" style="left:224px;top:727px;" width="7" height="4" viewBox="0 0 7 4"><path d="M0 0H7L3.5 4Z" fill="#e4e4e4"/></svg>
<div class="a" style="left:236px;top:720px;width:42px;height:16px;background:#3e3e3e;"></div>
<svg class="a" style="left:246px;top:723px;" width="7" height="9" viewBox="0 0 7 9"><path d="M0 0V9L6.5 4.5Z" fill="#6a6a6a"/></svg>
<svg class="a" style="left:260px;top:723px;" width="10" height="9" viewBox="0 0 10 9"><path d="M0 0V9L6.5 4.5Z" fill="#6a6a6a"/><path d="M8.5 0V9" stroke="#6a6a6a" stroke-width="1.4"/></svg>
<div class="a" style="left:278px;top:720px;width:1px;height:16px;background:#2a2a2a;"></div>
<div class="a" style="left:279px;top:720px;width:200px;height:16px;background:#3e3e3e;"></div>
<div class="t" style="left:358px;top:723.53px;font-size:10px;color:#d8d8d8;font-weight:400;">Selection</div>
<div class="a" style="left:478px;top:720px;width:19px;height:16px;background:#3e3e3e;border-left:1px solid #2a2a2a;border-right:1px solid #2a2a2a"></div>
<svg class="a" style="left:484px;top:723px;" width="7" height="10" viewBox="0 0 7 10"><path d="M0 0V10L6 5Z" fill="#cfcfcf"/></svg>
<svg class="a" style="left:502px;top:722px;" width="8" height="11" viewBox="0 0 8 11"><path d="M8 0V11L0 5.5Z" fill="#d8d8d8"/></svg>
<div class="a" style="left:773px;top:719px;width:17px;height:17px;background:#959595;border:1px solid #262626"></div>
<svg class="a" style="left:1054px;top:722px;" width="7" height="10" viewBox="0 0 7 10"><path d="M0 0V10L6.5 5Z" fill="#d8d8d8"/></svg>
<div class="a" style="left:1085px;top:74px;width:241px;height:662px;background:#4a4a4a;"></div>
<div class="a" style="left:1085px;top:74px;width:241px;height:12px;background:linear-gradient(#2a2a2a,#333);"></div>
<svg class="a" style="left:1314px;top:78px;" width="8" height="6" viewBox="0 0 8 6"><path d="M0 0V6L3.5 3Z M4.5 0V6L8 3Z" fill="#bdbdbd"/></svg>
<div class="a" style="left:1326px;top:74px;width:2px;height:662px;background:#2b2b2b;"></div>
<div class="a" style="left:1085px;top:86px;width:240px;height:18px;background:#323232;"></div>
<div class="a" style="left:1085px;top:86px;width:61px;height:18px;background:#4a4a4a;border-top:1px solid #595959"></div>
<div class="t" style="left:1092px;top:90.53px;font-size:10px;color:#dedede;font-weight:700;">Navigator</div>
<div class="a" style="left:1146px;top:86px;width:33px;height:18px;background:#393939;border-right:1px solid #2a2a2a"></div>
<div class="t" style="left:1153px;top:90.53px;font-size:10px;color:#9a9a9a;font-weight:700;">Info</div>
<svg class="a" style="left:1306px;top:92px;" width="16" height="9" viewBox="0 0 16 9"><path d="M0 3H5L2.5 6Z" fill="#e0e0e0"/><rect x="6" y="0" width="2" height="2" fill="#e0e0e0"/><rect x="6" y="3" width="2" height="2" fill="#e0e0e0"/><rect x="6" y="6" width="2" height="2" fill="#e0e0e0"/><rect x="9" y="0.5" width="6" height="1.3" fill="#e0e0e0"/><rect x="9" y="3.5" width="6" height="1.3" fill="#e0e0e0"/><rect x="9" y="6.5" width="6" height="1.3" fill="#e0e0e0"/></svg>
<div class="a" style="left:1085px;top:104px;width:240px;height:176px;background:#ffffff;"></div>
<div class="a" style="left:1168px;top:165px;width:149px;height:111px;border:1px solid #8a8a8a;border-top:none"></div>
<svg class="a" style="left:1085px;top:104px" width="240" height="176" viewBox="0 0 240 176"><g transform="translate(83,61) scale(0.186) translate(-156,-95)"><defs>
<linearGradient id="siden" gradientUnits="userSpaceOnUse" x1="336" y1="0" x2="766" y2="0"><stop offset="0.0000" stop-color="#c2c2c4"/><stop offset="0.0209" stop-color="#aeafb1"/><stop offset="0.0558" stop-color="#a0a1a4"/><stop offset="0.0860" stop-color="#a1a2a5"/><stop offset="0.1302" stop-color="#b4b5b7"/><stop offset="0.1953" stop-color="#cfcfd0"/><stop offset="0.2605" stop-color="#eaeaeb"/><stop offset="0.3233" stop-color="#d7d7d9"/><stop offset="0.3814" stop-color="#bfc0c2"/><stop offset="0.4395" stop-color="#afb0b2"/><stop offset="0.4860" stop-color="#c8c8c9"/><stop offset="0.5326" stop-color="#eeeeee"/><stop offset="0.5558" stop-color="#f6f6f6"/><stop offset="0.5744" stop-color="#f2f3f2"/><stop offset="0.5767" stop-color="#e4e4e4"/><stop offset="0.5791" stop-color="#ffffff"/><stop offset="0.6000" stop-color="#fcfcfc"/><stop offset="0.6256" stop-color="#ececec"/><stop offset="0.6721" stop-color="#d0d0d1"/><stop offset="0.7302" stop-color="#b5b6b8"/><stop offset="0.8000" stop-color="#c8c8ca"/><stop offset="0.8581" stop-color="#eeeeef"/><stop offset="0.9163" stop-color="#cfcfd0"/><stop offset="0.9512" stop-color="#b0b1b3"/><stop offset="0.9860" stop-color="#bdbdbf"/><stop offset="1.0000" stop-color="#c8c8ca"/></linearGradient>
<linearGradient id="rimn" gradientUnits="userSpaceOnUse" x1="145.20" y1="415.36" x2="198.00" y2="566.40"><stop offset="0.0000" stop-color="#c8c8ca"/><stop offset="0.1375" stop-color="#d8d8da"/><stop offset="0.3250" stop-color="#e6e6e7"/><stop offset="0.4688" stop-color="#f6f6f6"/><stop offset="0.5375" stop-color="#fafafa"/><stop offset="0.6562" stop-color="#ededee"/><stop offset="0.7812" stop-color="#e0e0e1"/><stop offset="1.0000" stop-color="#e0e0e2"/></linearGradient>
<linearGradient id="rimhin" gradientUnits="userSpaceOnUse" x1="0" y1="312" x2="0" y2="430">
<stop offset="0" stop-color="#fff" stop-opacity="0.5"/><stop offset="0.35" stop-color="#fff" stop-opacity="0"/>
</linearGradient>
<radialGradient id="rimhi2n" gradientUnits="userSpaceOnUse" cx="470" cy="392" r="70">
<stop offset="0" stop-color="#fff" stop-opacity="0.9"/><stop offset="1" stop-color="#fff" stop-opacity="0"/>
</radialGradient>
<linearGradient id="scrn" gradientUnits="userSpaceOnUse" x1="151.80" y1="434.24" x2="191.40" y2="547.52"><stop offset="0.0000" stop-color="#383838"/><stop offset="0.1500" stop-color="#2f2f2f"/><stop offset="0.2167" stop-color="#363637"/><stop offset="0.2583" stop-color="#505052"/><stop offset="0.3042" stop-color="#858688"/><stop offset="0.3583" stop-color="#9a9b9e"/><stop offset="0.4250" stop-color="#97989b"/><stop offset="0.4583" stop-color="#78787a"/><stop offset="0.4750" stop-color="#4c4c4e"/><stop offset="0.4858" stop-color="#88898c"/><stop offset="0.5417" stop-color="#909194"/><stop offset="0.6000" stop-color="#8a8a8c"/><stop offset="0.6458" stop-color="#6a6a6b"/><stop offset="0.6875" stop-color="#3a3a3a"/><stop offset="0.7333" stop-color="#2c2c2c"/><stop offset="0.8750" stop-color="#2e2e2e"/><stop offset="1.0000" stop-color="#353535"/></linearGradient>
</defs><path d="M309.2,402.7 L338,390.9 L338,370 L765,360 L765.5,397.3 L612,470 Q593,479 570,475.5 L311,405.3 Q307,404 309.2,402.7Z" fill="#3d3d3d"/><path d="M336.2,358 L766,348 L766,392.5 L336.2,402.5Z M347.04,396.57L481.34,361.39Q506.98,354.67 533.27,357.96L756.65,385.88Q774.21,388.08 758.26,395.74L623.48,460.43Q593.73,474.71 561.87,466.11L347.00,408.09Q325.38,402.25 347.04,396.57Z" fill="url(#siden)"/><path d="M347.04,352.07L481.34,316.89Q506.98,310.17 533.27,313.46L756.65,341.38Q774.21,343.58 758.26,351.24L623.48,415.93Q593.73,430.21 561.87,421.61L347.00,363.59Q325.38,357.75 347.04,352.07Z" fill="url(#rimn)"/><path d="M379.87,355.04L500.53,322.46Q508.54,320.29 516.78,321.35L718.83,347.21Q732.91,349.01 719.84,354.57L596.67,406.91Q582.59,412.90 567.82,408.91L379.87,358.16Q374.07,356.60 379.87,355.04Z" fill="url(#scrn)"/></g></svg>
<div class="a" style="left:1151px;top:163px;width:176px;height:117px;border:2px solid #ff3f3f;border-right:none"></div>
<div class="a" style="left:1085px;top:280px;width:240px;height:26px;background:#4a4a4a;"></div>
<div class="a" style="left:1087px;top:287px;width:48px;height:17px;background:#a8a8a8;border:1px solid #2e2e2e"></div>
<div class="t" style="left:1091px;top:291.54px;font-size:10px;color:#111;font-weight:400;">200%</div>
<svg class="a" style="left:1156px;top:294px;" width="10" height="6" viewBox="0 0 10 6"><path d="M0 5.5L5 0.5L10 5.5Z" fill="none" stroke="#d0d0d0" stroke-width="0.9"/><path d="M2.5 5.5L5 3L7.5 5.5" fill="none" stroke="#d0d0d0" stroke-width="0.8"/></svg>
<div class="a" style="left:1177px;top:294px;width:98px;height:4px;background:#2e2e2e;border-radius:2px"></div>
<svg class="a" style="left:1228px;top:288px;" width="11" height="11" viewBox="0 0 11 11"><path d="M0.5 4.5L5.5 0.5L10.5 4.5V10.5H0.5Z" fill="#5a5a5a" stroke="#2c2c2c"/></svg>
<svg class="a" style="left:1282px;top:289px;" width="18" height="10" viewBox="0 0 18 10"><path d="M0.5 9.5L6 2.5L9 6L12 1L17.5 9.5Z" fill="none" stroke="#d0d0d0" stroke-width="1"/><path d="M3 9.5L6 6L8 9.5M10 9.5L12 6L14.5 9.5" fill="none" stroke="#d0d0d0" stroke-width="0.8"/></svg>
<svg class="a" style="left:1313px;top:294px;" width="10" height="10" viewBox="0 0 10 10"><rect x="8" y="0" width="1" height="1" fill="#707070"/><rect x="6" y="2" width="1" height="1" fill="#707070"/><rect x="8" y="2" width="1" height="1" fill="#707070"/><rect x="4" y="4" width="1" height="1" fill="#707070"/><rect x="6" y="4" width="1" height="1" fill="#707070"/><rect x="8" y="4" width="1" height="1" fill="#707070"/><rect x="2" y="6" width="1" height="1" fill="#707070"/><rect x="4" y="6" width="1" height="1" fill="#707070"/><rect x="6" y="6" width="1" height="1" fill="#707070"/><rect x="8" y="6" width="1" height="1" fill="#707070"/><rect x="0" y="8" width="1" height="1" fill="#707070"/><rect x="2" y="8" width="1" height="1" fill="#707070"/><rect x="4" y="8" width="1" height="1" fill="#707070"/><rect x="6" y="8" width="1" height="1" fill="#707070"/><rect x="8" y="8" width="1" height="1" fill="#707070"/></svg>
<div class="a" style="left:1085px;top:306px;width:241px;height:2px;background:#2b2b2b;"></div>
<div class="a" style="left:1085px;top:308px;width:240px;height:18px;background:#323232;"></div>
<div class="a" style="left:1085px;top:308px;width:62px;height:18px;background:#393939;border-right:1px solid #2a2a2a"></div>
<div class="t" style="left:1092px;top:312.54px;font-size:10px;color:#9a9a9a;font-weight:700;">Artboards</div>
<div class="a" style="left:1147px;top:308px;width:40px;height:18px;background:#393939;border-right:1px solid #2a2a2a"></div>
<div class="t" style="left:1154px;top:312.54px;font-size:10px;color:#9a9a9a;font-weight:700;">Links</div>
<div class="a" style="left:1187px;top:308px;width:44px;height:18px;background:#4a4a4a;border-top:1px solid #595959"></div>
<div class="t" style="left:1194px;top:312.54px;font-size:10px;color:#dedede;font-weight:700;">Layers</div>
<svg class="a" style="left:1306px;top:314px;" width="16" height="9" viewBox="0 0 16 9"><path d="M0 3H5L2.5 6Z" fill="#e0e0e0"/><rect x="6" y="0" width="2" height="2" fill="#e0e0e0"/><rect x="6" y="3" width="2" height="2" fill="#e0e0e0"/><rect x="6" y="6" width="2" height="2" fill="#e0e0e0"/><rect x="9" y="0.5" width="6" height="1.3" fill="#e0e0e0"/><rect x="9" y="3.5" width="6" height="1.3" fill="#e0e0e0"/><rect x="9" y="6.5" width="6" height="1.3" fill="#e0e0e0"/></svg>
<div class="a" style="left:1085px;top:326px;width:240px;height:153px;background:#4a4a4a;"></div>
<div class="a" style="left:1090px;top:332px;width:230px;height:128px;background:#474747;border:1px solid #2e2e2e"></div>
<div class="a" style="left:1091px;top:333px;width:228px;height:20px;background:#5a6476;"></div>
<div class="a" style="left:1091px;top:353px;width:228px;height:1px;background:#363636;"></div>
<div class="a" style="left:1111px;top:333px;width:1px;height:20px;background:#363636;"></div>
<div class="a" style="left:1132px;top:333px;width:1px;height:20px;background:#363636;"></div>
<div class="a" style="left:1138px;top:333px;width:1px;height:20px;background:#363636;"></div>
<div class="a" style="left:1284px;top:333px;width:1px;height:20px;background:#363636;"></div>
<div class="a" style="left:1134px;top:334px;width:3px;height:18px;background:#3fd43f;"></div>
<svg class="a" style="left:1093px;top:338px;" width="14" height="10" viewBox="0 0 14 10"><path d="M0.8 5C3 0.8 11 0.8 13.2 5C11 9.2 3 9.2 0.8 5Z" fill="#c4c4c4"/><circle cx="7" cy="5" r="3" fill="#3a3a3a"/><circle cx="7.8" cy="3.9" r="1" fill="#d0d0d0"/></svg>
<svg class="a" style="left:1143px;top:339px;" width="8" height="9" viewBox="0 0 8 9"><path d="M1 0.5V8.5L7 4.5Z" fill="#d8d8d8"/></svg>
<div class="a" style="left:1160px;top:334px;width:18px;height:18px;background:#fff;border:1px solid #111"></div>
<div class="t" style="left:1183px;top:338.54px;font-size:10px;color:#dcdcdc;font-weight:400;">Layer 3</div>
<svg class="a" style="left:1288px;top:337px;" width="12" height="12" viewBox="0 0 12 12"><circle cx="6" cy="6" r="4.8" fill="none" stroke="#cfcfcf" stroke-width="1.2"/></svg>
<svg class="a" style="left:1311px;top:334px;" width="7" height="7" viewBox="0 0 7 7"><path d="M0 0H7V7Z" fill="#e0e0e0"/></svg>
<div class="a" style="left:1091px;top:354px;width:228px;height:20px;background:#484848;"></div>
<div class="a" style="left:1091px;top:374px;width:228px;height:1px;background:#363636;"></div>
<div class="a" style="left:1111px;top:354px;width:1px;height:20px;background:#363636;"></div>
<div class="a" style="left:1132px;top:354px;width:1px;height:20px;background:#363636;"></div>
<div class="a" style="left:1138px;top:354px;width:1px;height:20px;background:#363636;"></div>
<div class="a" style="left:1284px;top:354px;width:1px;height:20px;background:#363636;"></div>
<div class="a" style="left:1134px;top:355px;width:3px;height:18px;background:#ff4040;"></div>
<svg class="a" style="left:1093px;top:359px;" width="14" height="10" viewBox="0 0 14 10"><path d="M0.8 5C3 0.8 11 0.8 13.2 5C11 9.2 3 9.2 0.8 5Z" fill="#c4c4c4"/><circle cx="7" cy="5" r="3" fill="#3a3a3a"/><circle cx="7.8" cy="3.9" r="1" fill="#d0d0d0"/></svg>
<svg class="a" style="left:1143px;top:360px;" width="8" height="9" viewBox="0 0 8 9"><path d="M1 0.5V8.5L7 4.5Z" fill="#d8d8d8"/></svg>
<div class="a" style="left:1160px;top:355px;width:18px;height:18px;background:#fff;border:1px solid #111"></div>
<div class="t" style="left:1183px;top:359.54px;font-size:10px;color:#dcdcdc;font-weight:400;">Layer 2</div>
<svg class="a" style="left:1288px;top:358px;" width="12" height="12" viewBox="0 0 12 12"><circle cx="6" cy="6" r="4.8" fill="none" stroke="#cfcfcf" stroke-width="1.2"/></svg>
<div class="a" style="left:1091px;top:375px;width:228px;height:20px;background:#484848;"></div>
<div class="a" style="left:1091px;top:395px;width:228px;height:1px;background:#363636;"></div>
<div class="a" style="left:1111px;top:375px;width:1px;height:20px;background:#363636;"></div>
<div class="a" style="left:1132px;top:375px;width:1px;height:20px;background:#363636;"></div>
<div class="a" style="left:1138px;top:375px;width:1px;height:20px;background:#363636;"></div>
<div class="a" style="left:1284px;top:375px;width:1px;height:20px;background:#363636;"></div>
<div class="a" style="left:1134px;top:376px;width:3px;height:18px;background:#4545ff;"></div>
<svg class="a" style="left:1093px;top:380px;" width="14" height="10" viewBox="0 0 14 10"><path d="M0.8 5C3 0.8 11 0.8 13.2 5C11 9.2 3 9.2 0.8 5Z" fill="#c4c4c4"/><circle cx="7" cy="5" r="3" fill="#3a3a3a"/><circle cx="7.8" cy="3.9" r="1" fill="#d0d0d0"/></svg>
<svg class="a" style="left:1143px;top:381px;" width="8" height="9" viewBox="0 0 8 9"><path d="M1 0.5V8.5L7 4.5Z" fill="#d8d8d8"/></svg>
<div class="a" style="left:1160px;top:376px;width:18px;height:18px;background:#fff;border:1px solid #111"></div>
<div class="t" style="left:1183px;top:380.54px;font-size:10px;color:#dcdcdc;font-weight:400;">Layer 4</div>
<svg class="a" style="left:1288px;top:379px;" width="12" height="12" viewBox="0 0 12 12"><circle cx="6" cy="6" r="4.8" fill="none" stroke="#cfcfcf" stroke-width="1.2"/></svg>
<div class="a" style="left:1091px;top:396px;width:228px;height:20px;background:#484848;"></div>
<div class="a" style="left:1091px;top:416px;width:228px;height:1px;background:#363636;"></div>
<div class="a" style="left:1111px;top:396px;width:1px;height:20px;background:#363636;"></div>
<div class="a" style="left:1132px;top:396px;width:1px;height:20px;background:#363636;"></div>
<div class="a" style="left:1138px;top:396px;width:1px;height:20px;background:#363636;"></div>
<div class="a" style="left:1284px;top:396px;width:1px;height:20px;background:#363636;"></div>
<div class="a" style="left:1134px;top:397px;width:3px;height:18px;background:#4f80ff;"></div>
<svg class="a" style="left:1143px;top:402px;" width="8" height="9" viewBox="0 0 8 9"><path d="M1 0.5V8.5L7 4.5Z" fill="#d8d8d8"/></svg>
<div class="a" style="left:1160px;top:397px;width:18px;height:18px;background:#fff;border:1px solid #111"></div>
<div class="t" style="left:1183px;top:401.54px;font-size:10px;color:#dcdcdc;font-weight:400;">Layer 1</div>
<svg class="a" style="left:1288px;top:400px;" width="12" height="12" viewBox="0 0 12 12"><circle cx="6" cy="6" r="4.8" fill="none" stroke="#cfcfcf" stroke-width="1.2"/></svg>
<svg class="a" style="left:1161px;top:334px;" width="16" height="16" viewBox="0 0 16 16"><path d="M1 7.5L6 6L15 7.5L9 9.5Z" fill="#333"/><path d="M2 7.5L14 7.5" stroke="#888" stroke-width="0.5"/></svg>
<svg class="a" style="left:1161px;top:355px;" width="16" height="16" viewBox="0 0 16 16"><path d="M1 7L6 5.5L15 7L9 9.5Z" fill="#e4e4e4" stroke="#aaa" stroke-width="0.6"/><path d="M1 7V8.5L9 11L15 8.5V7" fill="none" stroke="#bbb" stroke-width="0.6"/></svg>
<svg class="a" style="left:1161px;top:376px;" width="16" height="16" viewBox="0 0 16 16"><path d="M1 7.5L8 10.5L15 7.5" fill="none" stroke="#333" stroke-width="1"/></svg>
<svg class="a" style="left:1161px;top:397px;" width="16" height="16" viewBox="0 0 16 16"><path d="M1 8L8 11L15 8" fill="none" stroke="#999" stroke-width="0.6"/></svg>
<div class="t" style="left:1090px;top:464.54px;font-size:10px;color:#dcdcdc;font-weight:400;">4 Layers</div>
<svg class="a" style="left:1182px;top:463px;" width="13" height="13" viewBox="0 0 13 13"><circle cx="7.5" cy="5" r="4" fill="none" stroke="#6a6a6a" stroke-width="1.1"/><path d="M4.5 8L1 11.5" stroke="#6a6a6a" stroke-width="1.2"/></svg>
<svg class="a" style="left:1207px;top:463px;" width="13" height="13" viewBox="0 0 13 13"><rect x="0.5" y="0.5" width="8" height="8" fill="none" stroke="#cfcfcf"/><rect x="2.5" y="2.5" width="4" height="4" fill="#bdbdbd"/><rect x="4.5" y="4.5" width="8" height="8" fill="none" stroke="#8a8a8a"/></svg>
<svg class="a" style="left:1233px;top:463px;" width="15" height="12" viewBox="0 0 15 12"><path d="M1 1L5 5M1 4H5V0" fill="none" stroke="#cfcfcf" stroke-width="1"/><path d="M6 3H14V11H9L6 8Z" fill="#bdbdbd"/><path d="M9 7V11" stroke="#444"/></svg>
<svg class="a" style="left:1260px;top:463px;" width="12" height="12" viewBox="0 0 12 12"><path d="M3 1H11V11H3V6H0V1Z" fill="#cfcfcf"/><path d="M0 6L3 11V6Z" fill="#888"/></svg>
<svg class="a" style="left:1286px;top:463px;" width="12" height="13" viewBox="0 0 12 13"><rect x="1" y="2" width="10" height="1.5" fill="#cfcfcf"/><rect x="4" y="0" width="4" height="2" fill="none" stroke="#cfcfcf" stroke-width="0.8"/><path d="M2 4H10V12H2Z" fill="none" stroke="#cfcfcf" stroke-width="1"/><path d="M4.5 5V11M6 5V11M7.5 5V11" stroke="#cfcfcf" stroke-width="0.8"/></svg>
<svg class="a" style="left:1313px;top:468px;" width="10" height="10" viewBox="0 0 10 10"><rect x="8" y="0" width="1" height="1" fill="#707070"/><rect x="6" y="2" width="1" height="1" fill="#707070"/><rect x="8" y="2" width="1" height="1" fill="#707070"/><rect x="4" y="4" width="1" height="1" fill="#707070"/><rect x="6" y="4" width="1" height="1" fill="#707070"/><rect x="8" y="4" width="1" height="1" fill="#707070"/><rect x="2" y="6" width="1" height="1" fill="#707070"/><rect x="4" y="6" width="1" height="1" fill="#707070"/><rect x="6" y="6" width="1" height="1" fill="#707070"/><rect x="8" y="6" width="1" height="1" fill="#707070"/><rect x="0" y="8" width="1" height="1" fill="#707070"/><rect x="2" y="8" width="1" height="1" fill="#707070"/><rect x="4" y="8" width="1" height="1" fill="#707070"/><rect x="6" y="8" width="1" height="1" fill="#707070"/><rect x="8" y="8" width="1" height="1" fill="#707070"/></svg>
<div class="a" style="left:1085px;top:479px;width:241px;height:2px;background:#2b2b2b;"></div>
<div class="a" style="left:1085px;top:481px;width:240px;height:18px;background:#323232;"></div>
<div class="a" style="left:1085px;top:481px;width:46px;height:18px;background:#4a4a4a;border-top:1px solid #595959"></div>
<div class="t" style="left:1099px;top:485.54px;font-size:10px;color:#dedede;font-weight:700;">Color</div>
<div class="a" style="left:1131px;top:481px;width:77px;height:18px;background:#393939;border-right:1px solid #2a2a2a"></div>
<div class="t" style="left:1138px;top:485.54px;font-size:10px;color:#9a9a9a;font-weight:700;">Transparency</div>
<div class="a" style="left:1208px;top:481px;width:54px;height:18px;background:#393939;border-right:1px solid #2a2a2a"></div>
<div class="t" style="left:1215px;top:485.54px;font-size:10px;color:#9a9a9a;font-weight:700;">Gradient</div>
<svg class="a" style="left:1306px;top:487px;" width="16" height="9" viewBox="0 0 16 9"><path d="M0 3H5L2.5 6Z" fill="#e0e0e0"/><rect x="6" y="0" width="2" height="2" fill="#e0e0e0"/><rect x="6" y="3" width="2" height="2" fill="#e0e0e0"/><rect x="6" y="6" width="2" height="2" fill="#e0e0e0"/><rect x="9" y="0.5" width="6" height="1.3" fill="#e0e0e0"/><rect x="9" y="3.5" width="6" height="1.3" fill="#e0e0e0"/><rect x="9" y="6.5" width="6" height="1.3" fill="#e0e0e0"/></svg>
<svg class="a" style="left:1089px;top:486px;" width="7" height="10" viewBox="0 0 7 10"><path d="M1 4.2L3.5 1.2L6 4.2M1 6.3L3.5 9.3L6 6.3" fill="none" stroke="#111" stroke-width="2.4"/><path d="M1 4.2L3.5 1.2L6 4.2M1 6.3L3.5 9.3L6 6.3" fill="none" stroke="#dcdcdc" stroke-width="1.2"/></svg>
<div class="a" style="left:1085px;top:499px;width:240px;height:66px;background:#4a4a4a;"></div>
<svg class="a" style="left:1090px;top:508px;" width="40" height="14" viewBox="0 0 40 14"><rect x="0.5" y="0.5" width="13" height="13" fill="#fff" stroke="#222"/><path d="M1 13L13 1" stroke="#e8202a" stroke-width="1.6"/><rect x="13.5" y="0.5" width="13" height="13" fill="#000" stroke="#222"/><rect x="26.5" y="0.5" width="13" height="13" fill="#fff" stroke="#222"/></svg>
<div class="t" style="left:1243px;top:512.53px;font-size:10px;color:#d8d8d8;font-weight:400;">#</div>
<div class="a" style="left:1255px;top:506px;width:53px;height:19px;background:#a6a6a6;border:1px solid #2e2e2e"></div>
<div class="t" style="left:1260px;top:511.54px;font-size:10px;color:#111;font-weight:400;">FFFFFF</div>
<div class="a" style="left:1091px;top:532px;width:217px;height:25px;border:1px solid #222;background:linear-gradient(180deg,rgba(255,255,255,1) 0%,rgba(255,255,255,0) 45%,rgba(0,0,0,0) 55%,rgba(0,0,0,1) 100%),linear-gradient(90deg,#f00 0%,#ff0 17%,#0f0 33%,#0ff 50%,#00f 67%,#f0f 83%,#f00 100%)"></div>
<div class="a" style="left:1085px;top:565px;width:241px;height:1px;background:#2b2b2b;"></div>
<div class="a" style="left:1085px;top:566px;width:240px;height:17px;background:#323232;"></div>
<div class="a" style="left:1085px;top:566px;width:68px;height:17px;background:#4a4a4a;border-top:1px solid #595959"></div>
<div class="t" style="left:1099px;top:569.53px;font-size:10px;color:#dedede;font-weight:700;">Transform</div>
<svg class="a" style="left:1306px;top:572px;" width="16" height="9" viewBox="0 0 16 9"><path d="M0 3H5L2.5 6Z" fill="#e0e0e0"/><rect x="6" y="0" width="2" height="2" fill="#e0e0e0"/><rect x="6" y="3" width="2" height="2" fill="#e0e0e0"/><rect x="6" y="6" width="2" height="2" fill="#e0e0e0"/><rect x="9" y="0.5" width="6" height="1.3" fill="#e0e0e0"/><rect x="9" y="3.5" width="6" height="1.3" fill="#e0e0e0"/><rect x="9" y="6.5" width="6" height="1.3" fill="#e0e0e0"/></svg>
<svg class="a" style="left:1089px;top:571px;" width="7" height="10" viewBox="0 0 7 10"><path d="M1 4.2L3.5 1.2L6 4.2M1 6.3L3.5 9.3L6 6.3" fill="none" stroke="#111" stroke-width="2.4"/><path d="M1 4.2L3.5 1.2L6 4.2M1 6.3L3.5 9.3L6 6.3" fill="none" stroke="#dcdcdc" stroke-width="1.2"/></svg>
<div class="a" style="left:1085px;top:583px;width:240px;height:131px;background:#4a4a4a;"></div>
<svg class="a" style="left:1089px;top:602px;" width="21" height="21" viewBox="0 0 21 21"><rect x="0.5" y="0.5" width="5" height="5" fill="none" stroke="#cfcfcf" stroke-width="0.9"/><rect x="0.5" y="7.5" width="5" height="5" fill="none" stroke="#cfcfcf" stroke-width="0.9"/><rect x="0.5" y="14.5" width="5" height="5" fill="none" stroke="#cfcfcf" stroke-width="0.9"/><rect x="7.5" y="0.5" width="5" height="5" fill="none" stroke="#cfcfcf" stroke-width="0.9"/><rect x="7.5" y="7.5" width="5" height="5" fill="#cfcfcf" stroke="#cfcfcf" stroke-width="0.9"/><rect x="7.5" y="14.5" width="5" height="5" fill="none" stroke="#cfcfcf" stroke-width="0.9"/><rect x="14.5" y="0.5" width="5" height="5" fill="none" stroke="#cfcfcf" stroke-width="0.9"/><rect x="14.5" y="7.5" width="5" height="5" fill="none" stroke="#cfcfcf" stroke-width="0.9"/><rect x="14.5" y="14.5" width="5" height="5" fill="none" stroke="#cfcfcf" stroke-width="0.9"/><path d="M5.5 3H7.5M12.5 3H14.5M5.5 10H7.5M12.5 10H14.5M5.5 17H7.5M12.5 17H14.5M3 5.5V7.5M10 5.5V7.5M17 5.5V7.5M3 12.5V14.5M10 12.5V14.5M17 12.5V14.5" stroke="#cfcfcf" stroke-width="0.9"/></svg>
<div class="t" style="left:1123px;top:594.53px;font-size:10px;color:#8a8a8a;font-weight:400;">X:</div>
<div class="a" style="left:1137px;top:590px;width:57px;height:19px;background:#797979;border:1px solid #333"></div>
<div class="t" style="left:1142px;top:595.53px;font-size:10px;color:#2e2e2e;font-weight:400;">0 px</div>
<div class="t" style="left:1200px;top:594.53px;font-size:10px;color:#8a8a8a;font-weight:400;">W:</div>
<div class="a" style="left:1217px;top:590px;width:57px;height:19px;background:#797979;border:1px solid #333"></div>
<div class="t" style="left:1222px;top:595.53px;font-size:10px;color:#2e2e2e;font-weight:400;">0 px</div>
<div class="t" style="left:1123px;top:620.53px;font-size:10px;color:#8a8a8a;font-weight:400;">Y:</div>
<div class="a" style="left:1137px;top:616px;width:57px;height:19px;background:#797979;border:1px solid #333"></div>
<div class="t" style="left:1142px;top:621.53px;font-size:10px;color:#2e2e2e;font-weight:400;">0 px</div>
<div class="t" style="left:1202px;top:620.53px;font-size:10px;color:#8a8a8a;font-weight:400;">H:</div>
<div class="a" style="left:1217px;top:616px;width:57px;height:19px;background:#797979;border:1px solid #333"></div>
<div class="t" style="left:1222px;top:621.53px;font-size:10px;color:#2e2e2e;font-weight:400;">0 px</div>
<svg class="a" style="left:1117px;top:646px;" width="17" height="10" viewBox="0 0 17 10"><path d="M0.5 8.5H10.5L6.5 1.5Z" fill="none" stroke="#777" stroke-width="1"/><text x="12" y="8" font-size="9" fill="#777" font-family="Liberation Sans">:</text></svg>
<div class="a" style="left:1137px;top:642px;width:55px;height:19px;background:#797979;border:1px solid #333"></div>
<div class="t" style="left:1142px;top:647.53px;font-size:10px;color:#2e2e2e;font-weight:400;">0°</div>
<div class="a" style="left:1176px;top:643px;width:15px;height:17px;background:#7d7d7d;border-left:1px solid #444"></div>
<svg class="a" style="left:1180px;top:649px;" width="7" height="4" viewBox="0 0 7 4"><path d="M0 0H7L3.5 4Z" fill="#a8a8a8"/></svg>
<svg class="a" style="left:1198px;top:646px;" width="17" height="10" viewBox="0 0 17 10"><path d="M1 8.5H6L11 1.5H6Z" fill="none" stroke="#777" stroke-width="1"/><text x="12" y="8" font-size="9" fill="#777" font-family="Liberation Sans">:</text></svg>
<div class="a" style="left:1218px;top:642px;width:55px;height:19px;background:#797979;border:1px solid #333"></div>
<div class="t" style="left:1223px;top:647.53px;font-size:10px;color:#2e2e2e;font-weight:400;">0°</div>
<div class="a" style="left:1257px;top:643px;width:15px;height:17px;background:#7d7d7d;border-left:1px solid #444"></div>
<svg class="a" style="left:1261px;top:649px;" width="7" height="4" viewBox="0 0 7 4"><path d="M0 0H7L3.5 4Z" fill="#a8a8a8"/></svg>
<div class="a" style="left:1279px;top:600px;width:24px;height:24px;background:#3a3a3a;border:1px solid #2a2a2a"></div>
<svg class="a" style="left:1285px;top:605px;" width="10" height="15" viewBox="0 0 10 15"><path d="M2 6.5V4A3 3 0 0 1 8 4V6.5M2 8.5V11A3 3 0 0 0 8 11V8.5" fill="none" stroke="#e4e4e4" stroke-width="1.8"/><path d="M5 4.5V10.5" stroke="#e4e4e4" stroke-width="1.4"/></svg>
<div class="a" style="left:1090px;top:667px;width:220px;height:1px;background:#3a3a3a;"></div>
<div class="a" style="left:1091px;top:675px;width:13px;height:13px;background:#565656;border:1px solid #3a3a3a"></div>
<svg class="a" style="left:1092px;top:676px;" width="11" height="11" viewBox="0 0 11 11"><path d="M1.5 5.5L4.5 8.5L10 1.5" fill="none" stroke="#8c8c8c" stroke-width="1.8"/></svg>
<div class="t" style="left:1107px;top:676.53px;font-size:10px;color:#8e8e8e;font-weight:400;">Scale Strokes &amp; Effects</div>
<div class="a" style="left:1091px;top:695px;width:13px;height:13px;background:#565656;border:1px solid #3a3a3a"></div>
<svg class="a" style="left:1092px;top:696px;" width="11" height="11" viewBox="0 0 11 11"><path d="M1.5 5.5L4.5 8.5L10 1.5" fill="none" stroke="#8c8c8c" stroke-width="1.8"/></svg>
<div class="t" style="left:1107px;top:696.53px;font-size:10px;color:#8e8e8e;font-weight:400;">Align to Pixel Grid</div>
<div class="a" style="left:1085px;top:714px;width:241px;height:2px;background:#2b2b2b;"></div>
<div class="a" style="left:1085px;top:716px;width:240px;height:17px;background:#323232;"></div>
<div class="a" style="left:1085px;top:716px;width:65px;height:17px;background:#4a4a4a;border-top:1px solid #595959"></div>
<div class="t" style="left:1099px;top:719.53px;font-size:10px;color:#dedede;font-weight:700;">Character</div>
<div class="a" style="left:1150px;top:716px;width:62px;height:17px;background:#393939;border-right:1px solid #2a2a2a"></div>
<div class="t" style="left:1157px;top:719.53px;font-size:10px;color:#9a9a9a;font-weight:700;">Paragraph</div>
<div class="a" style="left:1212px;top:716px;width:62px;height:17px;background:#393939;border-right:1px solid #2a2a2a"></div>
<div class="t" style="left:1219px;top:719.53px;font-size:10px;color:#9a9a9a;font-weight:700;">OpenType</div>
<svg class="a" style="left:1306px;top:722px;" width="16" height="9" viewBox="0 0 16 9"><path d="M0 3H5L2.5 6Z" fill="#e0e0e0"/><rect x="6" y="0" width="2" height="2" fill="#e0e0e0"/><rect x="6" y="3" width="2" height="2" fill="#e0e0e0"/><rect x="6" y="6" width="2" height="2" fill="#e0e0e0"/><rect x="9" y="0.5" width="6" height="1.3" fill="#e0e0e0"/><rect x="9" y="3.5" width="6" height="1.3" fill="#e0e0e0"/><rect x="9" y="6.5" width="6" height="1.3" fill="#e0e0e0"/></svg>
<svg class="a" style="left:1089px;top:721px;" width="7" height="10" viewBox="0 0 7 10"><path d="M1 4.2L3.5 1.2L6 4.2M1 6.3L3.5 9.3L6 6.3" fill="none" stroke="#111" stroke-width="2.4"/><path d="M1 4.2L3.5 1.2L6 4.2M1 6.3L3.5 9.3L6 6.3" fill="none" stroke="#dcdcdc" stroke-width="1.2"/></svg>
<div class="a" style="left:1085px;top:733px;width:241px;height:3px;background:#4a4a4a;"></div>
<div class="a" style="left:1328px;top:74px;width:38px;height:662px;background:#474747;"></div>
<div class="a" style="left:1328px;top:74px;width:38px;height:12px;background:linear-gradient(#2a2a2a,#333);"></div>
<svg class="a" style="left:1354px;top:78px;" width="8" height="6" viewBox="0 0 8 6"><path d="M3.5 0V6L0 3Z M8 0V6L4.5 3Z" fill="#bdbdbd"/></svg>
<div class="a" style="left:1365px;top:74px;width:1px;height:662px;background:#2b2b2b;"></div>
<div class="a" style="left:1328px;top:86px;width:37px;height:68px;background:#4a4a4a;"></div>
<div class="a" style="left:1328px;top:154px;width:37px;height:2px;background:#2b2b2b;"></div>
<div class="a" style="left:1337px;top:90px;width:19px;height:3px;background:repeating-linear-gradient(90deg,#151515 0 1px,transparent 1px 2px);"></div>
<div class="a" style="left:1328px;top:156px;width:37px;height:67px;background:#4a4a4a;"></div>
<div class="a" style="left:1328px;top:223px;width:37px;height:2px;background:#2b2b2b;"></div>
<div class="a" style="left:1337px;top:160px;width:19px;height:3px;background:repeating-linear-gradient(90deg,#151515 0 1px,transparent 1px 2px);"></div>
<div class="a" style="left:1328px;top:225px;width:37px;height:67px;background:#4a4a4a;"></div>
<div class="a" style="left:1328px;top:292px;width:37px;height:2px;background:#2b2b2b;"></div>
<div class="a" style="left:1337px;top:229px;width:19px;height:3px;background:repeating-linear-gradient(90deg,#151515 0 1px,transparent 1px 2px);"></div>
<div class="a" style="left:1328px;top:294px;width:37px;height:67px;background:#4a4a4a;"></div>
<div class="a" style="left:1328px;top:361px;width:37px;height:2px;background:#2b2b2b;"></div>
<div class="a" style="left:1337px;top:298px;width:19px;height:3px;background:repeating-linear-gradient(90deg,#151515 0 1px,transparent 1px 2px);"></div>
<div class="a" style="left:1328px;top:363px;width:37px;height:95px;background:#4a4a4a;"></div>
<div class="a" style="left:1328px;top:458px;width:37px;height:2px;background:#2b2b2b;"></div>
<div class="a" style="left:1337px;top:367px;width:19px;height:3px;background:repeating-linear-gradient(90deg,#151515 0 1px,transparent 1px 2px);"></div>
<div class="a" style="left:1328px;top:460px;width:37px;height:39px;background:#4a4a4a;"></div>
<div class="a" style="left:1328px;top:499px;width:37px;height:2px;background:#2b2b2b;"></div>
<div class="a" style="left:1337px;top:464px;width:19px;height:3px;background:repeating-linear-gradient(90deg,#151515 0 1px,transparent 1px 2px);"></div>
<svg class="a" style="left:1339px;top:100px;" width="18" height="18" viewBox="0 0 18 18"><circle cx="9" cy="9" r="7.8" fill="none" stroke="#bdbdbd" stroke-width="1.2" stroke-dasharray="2 1.5"/><circle cx="9" cy="9" r="5.5" fill="#a8a8a8"/></svg>
<svg class="a" style="left:1339px;top:128px;" width="18" height="18" viewBox="0 0 18 18"><path d="M1 1A16 16 0 0 1 17 17H1Z" fill="#2c2c2c" stroke="#bdbdbd" stroke-width="1"/><path d="M1 17L1 1A16 16 0 0 1 9 3Z" fill="#bdbdbd"/><path d="M1 17L9 3A16 16 0 0 1 14 8Z" fill="#8a8a8a"/><path d="M1 17L14 8A16 16 0 0 1 17 13Z" fill="#555"/></svg>
<svg class="a" style="left:1340px;top:170px;" width="16" height="16" viewBox="0 0 16 16"><path d="M1 0V16" stroke="#bdbdbd" stroke-width="1.2"/><rect x="3" y="2" width="7" height="5" fill="#bdbdbd"/><rect x="3" y="9" width="12" height="5" fill="#bdbdbd"/></svg>
<svg class="a" style="left:1340px;top:198px;" width="16" height="16" viewBox="0 0 16 16"><rect x="0" y="0" width="10" height="10" fill="#9a9a9a"/><rect x="5" y="5" width="11" height="11" fill="#bdbdbd"/><rect x="5" y="5" width="5" height="5" fill="#333" stroke="#bdbdbd" stroke-width="1"/></svg>
<svg class="a" style="left:1339px;top:237px;" width="19" height="17" viewBox="0 0 19 17"><text x="7" y="12" font-family="Liberation Sans" font-size="15" font-weight="700" fill="#bdbdbd">A</text><rect x="0.5" y="8.5" width="6" height="6" fill="#4a4a4a" stroke="#bdbdbd"/><rect x="3.5" y="11.5" width="6" height="5" fill="#4a4a4a" stroke="#bdbdbd"/></svg>
<svg class="a" style="left:1339px;top:266px;" width="19" height="18" viewBox="0 0 19 18"><path d="M8 1H17V14M14 1V14" fill="none" stroke="#bdbdbd" stroke-width="1.6"/><circle cx="10" cy="4.5" r="3.5" fill="#bdbdbd"/><rect x="0.5" y="9.5" width="6" height="6" fill="#4a4a4a" stroke="#bdbdbd"/><rect x="3.5" y="12.5" width="6" height="5" fill="#4a4a4a" stroke="#bdbdbd"/></svg>
<svg class="a" style="left:1339px;top:306px;" width="18" height="21" viewBox="0 0 18 21"><rect x="4" y="10" width="10" height="10" fill="#bdbdbd"/><path d="M6 10L3 2M9 10V3M12 10L15 3" stroke="#bdbdbd" stroke-width="1.5"/><circle cx="3" cy="2.5" r="2" fill="#bdbdbd"/><circle cx="15" cy="3" r="2" fill="#bdbdbd"/></svg>
<svg class="a" style="left:1339px;top:335px;" width="17" height="18" viewBox="0 0 17 18"><circle cx="8.5" cy="4.5" r="4" fill="#bdbdbd"/><circle cx="4" cy="10" r="4" fill="#bdbdbd"/><circle cx="13" cy="10" r="4" fill="#bdbdbd"/><path d="M8.5 8L6 17H11Z" fill="#bdbdbd"/></svg>
<svg class="a" style="left:1339px;top:378px;" width="18" height="14" viewBox="0 0 18 14"><rect x="0" y="0" width="18" height="2" fill="#bdbdbd"/><rect x="0" y="5" width="18" height="2" fill="#bdbdbd"/><rect x="0" y="10" width="18" height="3" fill="#bdbdbd"/></svg>
<svg class="a" style="left:1339px;top:407px;" width="17" height="15" viewBox="0 0 17 15"><rect x="0" y="0.0" width="5" height="4.5" fill="#333" stroke="#bdbdbd" stroke-width="0.6"/><rect x="0" y="5.3" width="5" height="4.5" fill="#bdbdbd" stroke="#bdbdbd" stroke-width="0.6"/><rect x="0" y="10.6" width="5" height="4.5" fill="#bdbdbd" stroke="#bdbdbd" stroke-width="0.6"/><rect x="6" y="0.0" width="5" height="4.5" fill="#bdbdbd" stroke="#bdbdbd" stroke-width="0.6"/><rect x="6" y="5.3" width="5" height="4.5" fill="#bdbdbd" stroke="#bdbdbd" stroke-width="0.6"/><rect x="6" y="10.6" width="5" height="4.5" fill="#bdbdbd" stroke="#bdbdbd" stroke-width="0.6"/><rect x="12" y="0.0" width="5" height="4.5" fill="#bdbdbd" stroke="#bdbdbd" stroke-width="0.6"/><rect x="12" y="5.3" width="5" height="4.5" fill="#bdbdbd" stroke="#bdbdbd" stroke-width="0.6"/><rect x="12" y="10.6" width="5" height="4.5" fill="#bdbdbd" stroke="#bdbdbd" stroke-width="0.6"/></svg>
<svg class="a" style="left:1339px;top:434px;" width="18" height="19" viewBox="0 0 18 19"><rect x="5.5" y="1.5" width="11" height="11" fill="none" stroke="#bdbdbd" stroke-width="1.1"/><rect x="0.5" y="10.5" width="6" height="6" fill="#4a4a4a" stroke="#bdbdbd"/><rect x="3.5" y="13.5" width="6" height="5" fill="#4a4a4a" stroke="#bdbdbd"/></svg>
<svg class="a" style="left:1337px;top:474px;" width="22" height="20" viewBox="0 0 22 20"><text x="2" y="17" font-family="Liberation Serif" font-style="italic" font-size="20" fill="#bdbdbd">A</text></svg>
</body></html>
